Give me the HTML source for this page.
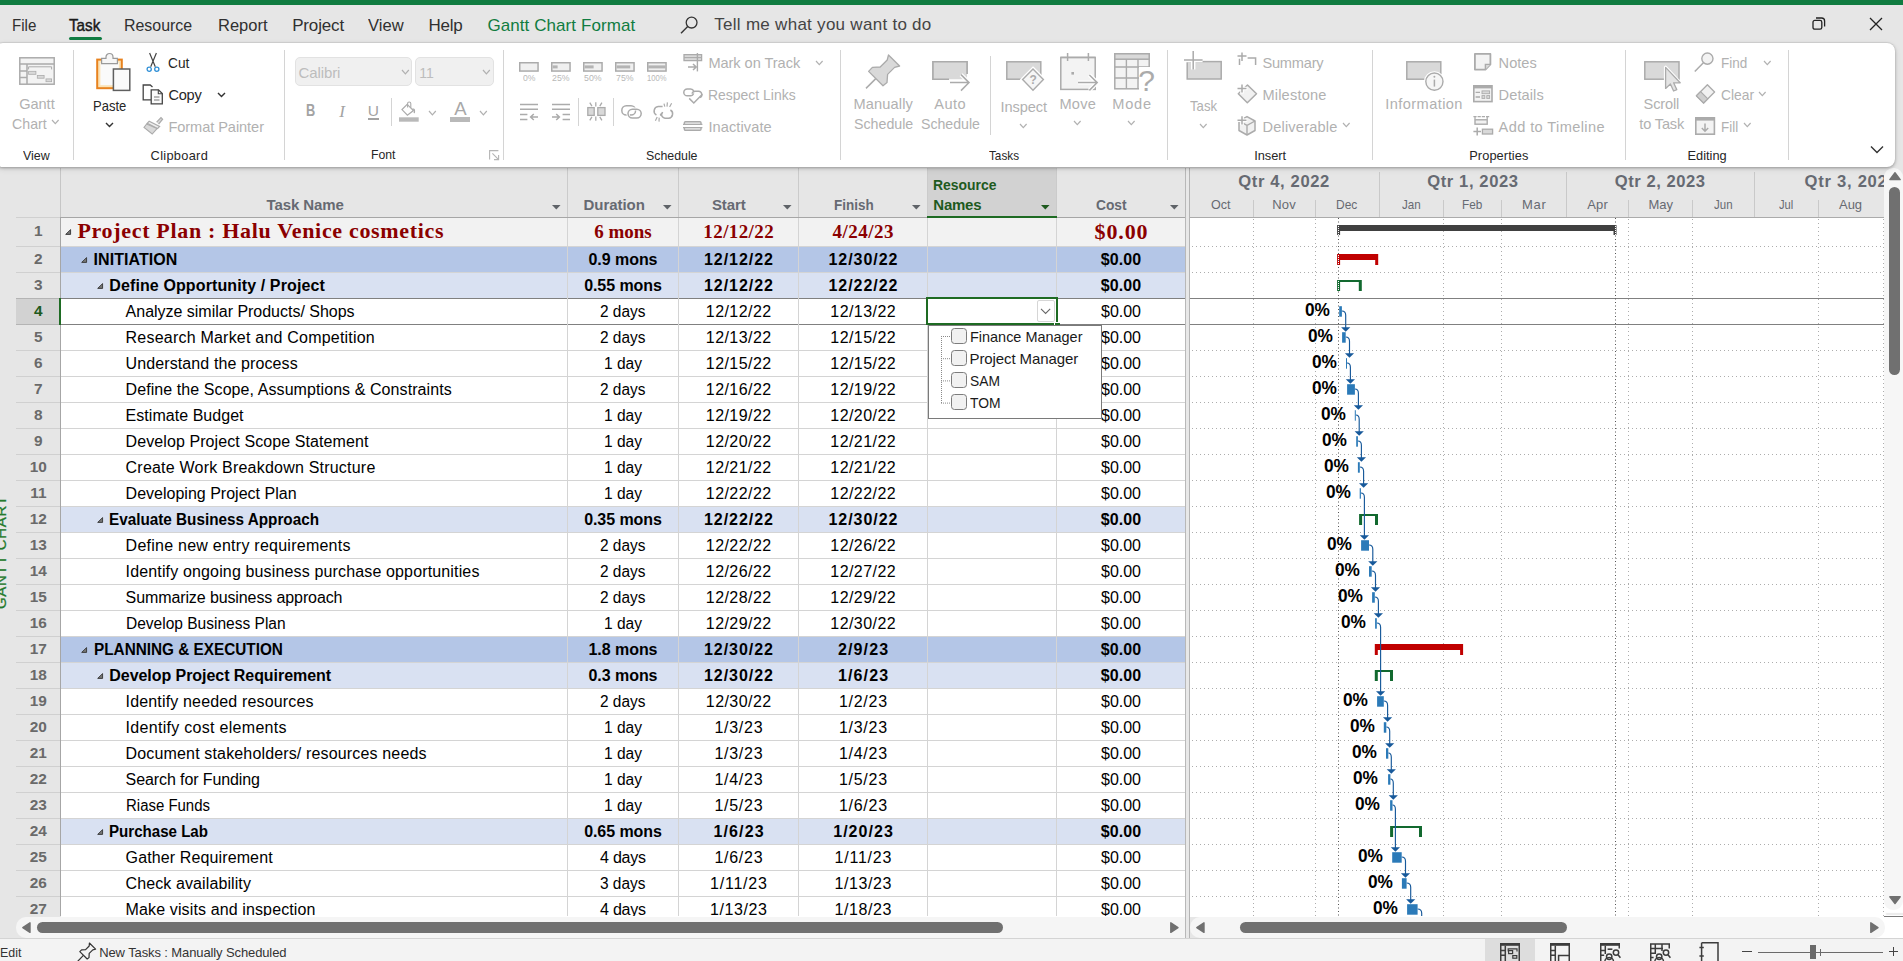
<!DOCTYPE html><html><head><meta charset="utf-8"><title>Project</title><style>html,body{margin:0;padding:0}body{width:1903px;height:961px;position:relative;overflow:hidden;background:#e6e6e6;font-family:'Liberation Sans',sans-serif}
body>div,body>span,body>svg{position:absolute;display:block}span{white-space:pre}svg{overflow:visible}</style></head><body>
<div style="left:0px;top:166px;width:1903px;height:772px;background:#e6e6e6;"></div>
<div style="left:61px;top:218px;width:1124px;height:698px;background:#fff;"></div>
<div style="left:61px;top:218px;width:1124px;height:28px;background:#f2f2f2;"></div>
<div style="left:61px;top:247px;width:1124px;height:25px;background:#b4c6e7;"></div>
<div style="left:61px;top:273px;width:1124px;height:25px;background:#d9e1f2;"></div>
<div style="left:61px;top:507px;width:1124px;height:25px;background:#d9e1f2;"></div>
<div style="left:61px;top:637px;width:1124px;height:25px;background:#b4c6e7;"></div>
<div style="left:61px;top:663px;width:1124px;height:25px;background:#d9e1f2;"></div>
<div style="left:61px;top:819px;width:1124px;height:25px;background:#d9e1f2;"></div>
<div style="left:16px;top:299px;width:43px;height:25px;background:#d2d2d2;"></div>
<div style="left:16px;top:246px;width:45px;height:1px;background:#d0d0d0;"></div>
<div style="left:61px;top:246px;width:1124px;height:1px;background:#d4d4d4;"></div>
<div style="left:16px;top:272px;width:45px;height:1px;background:#d0d0d0;"></div>
<div style="left:61px;top:272px;width:1124px;height:1px;background:#d4d4d4;"></div>
<div style="left:16px;top:298px;width:45px;height:1px;background:#b4b4b4;"></div>
<div style="left:61px;top:298px;width:1124px;height:1px;background:#808080;"></div>
<div style="left:16px;top:324px;width:45px;height:1px;background:#b4b4b4;"></div>
<div style="left:61px;top:324px;width:1124px;height:1px;background:#808080;"></div>
<div style="left:16px;top:350px;width:45px;height:1px;background:#d0d0d0;"></div>
<div style="left:61px;top:350px;width:1124px;height:1px;background:#d4d4d4;"></div>
<div style="left:16px;top:376px;width:45px;height:1px;background:#d0d0d0;"></div>
<div style="left:61px;top:376px;width:1124px;height:1px;background:#d4d4d4;"></div>
<div style="left:16px;top:402px;width:45px;height:1px;background:#d0d0d0;"></div>
<div style="left:61px;top:402px;width:1124px;height:1px;background:#d4d4d4;"></div>
<div style="left:16px;top:428px;width:45px;height:1px;background:#d0d0d0;"></div>
<div style="left:61px;top:428px;width:1124px;height:1px;background:#d4d4d4;"></div>
<div style="left:16px;top:454px;width:45px;height:1px;background:#d0d0d0;"></div>
<div style="left:61px;top:454px;width:1124px;height:1px;background:#d4d4d4;"></div>
<div style="left:16px;top:480px;width:45px;height:1px;background:#d0d0d0;"></div>
<div style="left:61px;top:480px;width:1124px;height:1px;background:#d4d4d4;"></div>
<div style="left:16px;top:506px;width:45px;height:1px;background:#d0d0d0;"></div>
<div style="left:61px;top:506px;width:1124px;height:1px;background:#d4d4d4;"></div>
<div style="left:16px;top:532px;width:45px;height:1px;background:#d0d0d0;"></div>
<div style="left:61px;top:532px;width:1124px;height:1px;background:#d4d4d4;"></div>
<div style="left:16px;top:558px;width:45px;height:1px;background:#d0d0d0;"></div>
<div style="left:61px;top:558px;width:1124px;height:1px;background:#d4d4d4;"></div>
<div style="left:16px;top:584px;width:45px;height:1px;background:#d0d0d0;"></div>
<div style="left:61px;top:584px;width:1124px;height:1px;background:#d4d4d4;"></div>
<div style="left:16px;top:610px;width:45px;height:1px;background:#d0d0d0;"></div>
<div style="left:61px;top:610px;width:1124px;height:1px;background:#d4d4d4;"></div>
<div style="left:16px;top:636px;width:45px;height:1px;background:#d0d0d0;"></div>
<div style="left:61px;top:636px;width:1124px;height:1px;background:#d4d4d4;"></div>
<div style="left:16px;top:662px;width:45px;height:1px;background:#d0d0d0;"></div>
<div style="left:61px;top:662px;width:1124px;height:1px;background:#d4d4d4;"></div>
<div style="left:16px;top:688px;width:45px;height:1px;background:#d0d0d0;"></div>
<div style="left:61px;top:688px;width:1124px;height:1px;background:#d4d4d4;"></div>
<div style="left:16px;top:714px;width:45px;height:1px;background:#d0d0d0;"></div>
<div style="left:61px;top:714px;width:1124px;height:1px;background:#d4d4d4;"></div>
<div style="left:16px;top:740px;width:45px;height:1px;background:#d0d0d0;"></div>
<div style="left:61px;top:740px;width:1124px;height:1px;background:#d4d4d4;"></div>
<div style="left:16px;top:766px;width:45px;height:1px;background:#d0d0d0;"></div>
<div style="left:61px;top:766px;width:1124px;height:1px;background:#d4d4d4;"></div>
<div style="left:16px;top:792px;width:45px;height:1px;background:#d0d0d0;"></div>
<div style="left:61px;top:792px;width:1124px;height:1px;background:#d4d4d4;"></div>
<div style="left:16px;top:818px;width:45px;height:1px;background:#d0d0d0;"></div>
<div style="left:61px;top:818px;width:1124px;height:1px;background:#d4d4d4;"></div>
<div style="left:16px;top:844px;width:45px;height:1px;background:#d0d0d0;"></div>
<div style="left:61px;top:844px;width:1124px;height:1px;background:#d4d4d4;"></div>
<div style="left:16px;top:870px;width:45px;height:1px;background:#d0d0d0;"></div>
<div style="left:61px;top:870px;width:1124px;height:1px;background:#d4d4d4;"></div>
<div style="left:16px;top:896px;width:45px;height:1px;background:#d0d0d0;"></div>
<div style="left:61px;top:896px;width:1124px;height:1px;background:#d4d4d4;"></div>
<div style="left:567px;top:168px;width:1px;height:49px;background:#cbcbcb;"></div>
<div style="left:567px;top:218px;width:1px;height:698px;background:#d4d4d4;"></div>
<div style="left:678px;top:168px;width:1px;height:49px;background:#cbcbcb;"></div>
<div style="left:678px;top:218px;width:1px;height:698px;background:#d4d4d4;"></div>
<div style="left:798px;top:168px;width:1px;height:49px;background:#cbcbcb;"></div>
<div style="left:798px;top:218px;width:1px;height:698px;background:#d4d4d4;"></div>
<div style="left:927px;top:168px;width:1px;height:49px;background:#cbcbcb;"></div>
<div style="left:927px;top:218px;width:1px;height:698px;background:#d4d4d4;"></div>
<div style="left:1056px;top:168px;width:1px;height:49px;background:#cbcbcb;"></div>
<div style="left:1056px;top:218px;width:1px;height:698px;background:#d4d4d4;"></div>
<div style="left:60px;top:168px;width:1px;height:49px;background:#c6c6c6;"></div>
<div style="left:60px;top:217px;width:1px;height:699px;background:#a6a6a6;"></div>
<div style="left:928px;top:168px;width:128px;height:48px;background:#d2d2d2;"></div>
<div style="left:927px;top:215.5px;width:130px;height:2px;background:#1e6b23;"></div>
<div style="left:16px;top:217px;width:44px;height:1px;background:#d0d0d0;"></div>
<div style="left:61px;top:217px;width:866px;height:1px;background:#a6a6a6;"></div>
<div style="left:1057px;top:217px;width:128px;height:1px;background:#a6a6a6;"></div>
<span style="left:266.50px;top:197.30px;font:700 15px/15px 'Liberation Sans',sans-serif;color:#666a72;letter-spacing:-0.084px;">Task Name</span>
<span style="left:583.50px;top:197.30px;font:700 15px/15px 'Liberation Sans',sans-serif;color:#666a72;letter-spacing:-0.050px;">Duration</span>
<span style="left:711.90px;top:197.30px;font:700 15px/15px 'Liberation Sans',sans-serif;color:#666a72;letter-spacing:-0.100px;">Start</span>
<span style="left:833.70px;top:197.30px;font:700 15px/15px 'Liberation Sans',sans-serif;color:#666a72;transform:scaleX(0.8987);transform-origin:0 0;">Finish</span>
<span style="left:933.30px;top:177.10px;font:700 15px/15px 'Liberation Sans',sans-serif;color:#1e5a1e;transform:scaleX(0.9284);transform-origin:0 0;">Resource</span>
<span style="left:933.30px;top:197.30px;font:700 15px/15px 'Liberation Sans',sans-serif;color:#1e5a1e;letter-spacing:-0.250px;">Names</span>
<span style="left:1096.20px;top:197.30px;font:700 15px/15px 'Liberation Sans',sans-serif;color:#666a72;transform:scaleX(0.9189);transform-origin:0 0;">Cost</span>
<svg style="left:552px;top:205.3px;" width="8.6" height="4.6" viewBox="0 0 8.6 4.6"><path d="M0 0 H8.6 L4.3 4.5 Z" fill="#5f6368"/></svg>
<svg style="left:663px;top:205.3px;" width="8.6" height="4.6" viewBox="0 0 8.6 4.6"><path d="M0 0 H8.6 L4.3 4.5 Z" fill="#5f6368"/></svg>
<svg style="left:782.6px;top:205.3px;" width="8.6" height="4.6" viewBox="0 0 8.6 4.6"><path d="M0 0 H8.6 L4.3 4.5 Z" fill="#5f6368"/></svg>
<svg style="left:911.7px;top:205.3px;" width="8.6" height="4.6" viewBox="0 0 8.6 4.6"><path d="M0 0 H8.6 L4.3 4.5 Z" fill="#5f6368"/></svg>
<svg style="left:1040.8px;top:205.3px;" width="8.6" height="4.6" viewBox="0 0 8.6 4.6"><path d="M0 0 H8.6 L4.3 4.5 Z" fill="#1e5a1e"/></svg>
<svg style="left:1169.9px;top:205.3px;" width="8.6" height="4.6" viewBox="0 0 8.6 4.6"><path d="M0 0 H8.6 L4.3 4.5 Z" fill="#5f6368"/></svg>
<span style="left:34.03px;top:222.76px;font:700 15.4px/15.4px 'Liberation Sans',sans-serif;color:#6a6a6a;">1</span>
<span style="left:77.40px;top:220.27px;font:700 22px/22px 'Liberation Serif',serif;color:#8b0000;letter-spacing:0.682px;">Project Plan : Halu Venice cosmetics</span>
<span style="left:594.35px;top:221.59px;font:700 19px/19px 'Liberation Serif',serif;color:#8b0000;letter-spacing:-0.054px;">6 mons</span>
<span style="left:703.35px;top:221.59px;font:700 19px/19px 'Liberation Serif',serif;color:#8b0000;letter-spacing:0.394px;">12/12/22</span>
<span style="left:832.45px;top:221.59px;font:700 19px/19px 'Liberation Serif',serif;color:#8b0000;letter-spacing:0.509px;">4/24/23</span>
<span style="left:1094.50px;top:220.57px;font:700 22px/22px 'Liberation Serif',serif;color:#8b0000;letter-spacing:0.875px;">$0.00</span>
<svg style="left:65.3px;top:228.8px;" width="6.4" height="6" viewBox="0 0 6.4 6"><path d="M5.6 .6 V5.4 H.7 Z" fill="#777" stroke="#333" stroke-width=".9" stroke-linejoin="round"/></svg>
<span style="left:34.03px;top:251.36px;font:700 15.4px/15.4px 'Liberation Sans',sans-serif;color:#6a6a6a;">2</span>
<span style="left:93.50px;top:251.86px;font:700 16px/16px 'Liberation Sans',sans-serif;color:#000;letter-spacing:0.069px;">INITIATION</span>
<span style="left:588.50px;top:251.86px;font:700 16px/16px 'Liberation Sans',sans-serif;color:#000;letter-spacing:-0.051px;">0.9 mons</span>
<span style="left:704.00px;top:251.86px;font:700 16px/16px 'Liberation Sans',sans-serif;color:#000;letter-spacing:0.954px;">12/12/22</span>
<span style="left:828.50px;top:251.86px;font:700 16px/16px 'Liberation Sans',sans-serif;color:#000;letter-spacing:0.954px;">12/30/22</span>
<span style="left:1100.80px;top:251.86px;font:700 16px/16px 'Liberation Sans',sans-serif;color:#000;letter-spacing:0.080px;">$0.00</span>
<svg style="left:81.2px;top:256.8px;" width="6.4" height="6" viewBox="0 0 6.4 6"><path d="M5.6 .6 V5.4 H.7 Z" fill="#777" stroke="#333" stroke-width=".9" stroke-linejoin="round"/></svg>
<span style="left:34.03px;top:277.36px;font:700 15.4px/15.4px 'Liberation Sans',sans-serif;color:#6a6a6a;">3</span>
<span style="left:109.30px;top:277.86px;font:700 16px/16px 'Liberation Sans',sans-serif;color:#000;letter-spacing:0.112px;">Define Opportunity / Project</span>
<span style="left:584.15px;top:277.86px;font:700 16px/16px 'Liberation Sans',sans-serif;color:#000;letter-spacing:-0.067px;">0.55 mons</span>
<span style="left:704.00px;top:277.86px;font:700 16px/16px 'Liberation Sans',sans-serif;color:#000;letter-spacing:0.954px;">12/12/22</span>
<span style="left:828.50px;top:277.86px;font:700 16px/16px 'Liberation Sans',sans-serif;color:#000;letter-spacing:0.954px;">12/22/22</span>
<span style="left:1100.80px;top:277.86px;font:700 16px/16px 'Liberation Sans',sans-serif;color:#000;letter-spacing:0.080px;">$0.00</span>
<svg style="left:97.4px;top:282.8px;" width="6.4" height="6" viewBox="0 0 6.4 6"><path d="M5.6 .6 V5.4 H.7 Z" fill="#777" stroke="#333" stroke-width=".9" stroke-linejoin="round"/></svg>
<span style="left:34.03px;top:303.36px;font:700 15.4px/15.4px 'Liberation Sans',sans-serif;color:#1e5a1e;">4</span>
<span style="left:125.60px;top:303.86px;font:400 16px/16px 'Liberation Sans',sans-serif;color:#000;letter-spacing:-0.015px;">Analyze similar Products/ Shops</span>
<span style="left:600.30px;top:303.86px;font:400 16px/16px 'Liberation Sans',sans-serif;color:#000;transform:scaleX(0.9635);transform-origin:0 0;">2 days</span>
<span style="left:705.81px;top:303.86px;font:400 16px/16px 'Liberation Sans',sans-serif;color:#000;letter-spacing:0.437px;">12/12/22</span>
<span style="left:830.31px;top:303.86px;font:400 16px/16px 'Liberation Sans',sans-serif;color:#000;letter-spacing:0.437px;">12/13/22</span>
<span style="left:1101.00px;top:303.86px;font:400 16px/16px 'Liberation Sans',sans-serif;color:#000;letter-spacing:-0.020px;">$0.00</span>
<span style="left:34.03px;top:329.36px;font:700 15.4px/15.4px 'Liberation Sans',sans-serif;color:#6a6a6a;">5</span>
<span style="left:125.60px;top:329.86px;font:400 16px/16px 'Liberation Sans',sans-serif;color:#000;letter-spacing:0.213px;">Research Market and Competition</span>
<span style="left:600.30px;top:329.86px;font:400 16px/16px 'Liberation Sans',sans-serif;color:#000;transform:scaleX(0.9635);transform-origin:0 0;">2 days</span>
<span style="left:705.81px;top:329.86px;font:400 16px/16px 'Liberation Sans',sans-serif;color:#000;letter-spacing:0.437px;">12/13/22</span>
<span style="left:830.31px;top:329.86px;font:400 16px/16px 'Liberation Sans',sans-serif;color:#000;letter-spacing:0.437px;">12/15/22</span>
<span style="left:1101.00px;top:329.86px;font:400 16px/16px 'Liberation Sans',sans-serif;color:#000;letter-spacing:-0.020px;">$0.00</span>
<span style="left:34.03px;top:355.36px;font:700 15.4px/15.4px 'Liberation Sans',sans-serif;color:#6a6a6a;">6</span>
<span style="left:125.60px;top:355.86px;font:400 16px/16px 'Liberation Sans',sans-serif;color:#000;letter-spacing:0.103px;">Understand the process</span>
<span style="left:604.00px;top:355.86px;font:400 16px/16px 'Liberation Sans',sans-serif;color:#000;transform:scaleX(0.9714);transform-origin:0 0;">1 day</span>
<span style="left:705.81px;top:355.86px;font:400 16px/16px 'Liberation Sans',sans-serif;color:#000;letter-spacing:0.437px;">12/15/22</span>
<span style="left:830.31px;top:355.86px;font:400 16px/16px 'Liberation Sans',sans-serif;color:#000;letter-spacing:0.437px;">12/15/22</span>
<span style="left:1101.00px;top:355.86px;font:400 16px/16px 'Liberation Sans',sans-serif;color:#000;letter-spacing:-0.020px;">$0.00</span>
<span style="left:34.03px;top:381.36px;font:700 15.4px/15.4px 'Liberation Sans',sans-serif;color:#6a6a6a;">7</span>
<span style="left:125.60px;top:381.86px;font:400 16px/16px 'Liberation Sans',sans-serif;color:#000;letter-spacing:0.077px;">Define the Scope, Assumptions &amp; Constraints</span>
<span style="left:600.30px;top:381.86px;font:400 16px/16px 'Liberation Sans',sans-serif;color:#000;transform:scaleX(0.9635);transform-origin:0 0;">2 days</span>
<span style="left:705.81px;top:381.86px;font:400 16px/16px 'Liberation Sans',sans-serif;color:#000;letter-spacing:0.437px;">12/16/22</span>
<span style="left:830.31px;top:381.86px;font:400 16px/16px 'Liberation Sans',sans-serif;color:#000;letter-spacing:0.437px;">12/19/22</span>
<span style="left:1101.00px;top:381.86px;font:400 16px/16px 'Liberation Sans',sans-serif;color:#000;letter-spacing:-0.020px;">$0.00</span>
<span style="left:34.03px;top:407.36px;font:700 15.4px/15.4px 'Liberation Sans',sans-serif;color:#6a6a6a;">8</span>
<span style="left:125.60px;top:407.86px;font:400 16px/16px 'Liberation Sans',sans-serif;color:#000;letter-spacing:0.040px;">Estimate Budget</span>
<span style="left:604.00px;top:407.86px;font:400 16px/16px 'Liberation Sans',sans-serif;color:#000;transform:scaleX(0.9714);transform-origin:0 0;">1 day</span>
<span style="left:705.81px;top:407.86px;font:400 16px/16px 'Liberation Sans',sans-serif;color:#000;letter-spacing:0.437px;">12/19/22</span>
<span style="left:830.31px;top:407.86px;font:400 16px/16px 'Liberation Sans',sans-serif;color:#000;letter-spacing:0.437px;">12/20/22</span>
<span style="left:1101.00px;top:407.86px;font:400 16px/16px 'Liberation Sans',sans-serif;color:#000;letter-spacing:-0.020px;">$0.00</span>
<span style="left:34.03px;top:433.36px;font:700 15.4px/15.4px 'Liberation Sans',sans-serif;color:#6a6a6a;">9</span>
<span style="left:125.60px;top:433.86px;font:400 16px/16px 'Liberation Sans',sans-serif;color:#000;letter-spacing:0.088px;">Develop Project Scope Statement</span>
<span style="left:604.00px;top:433.86px;font:400 16px/16px 'Liberation Sans',sans-serif;color:#000;transform:scaleX(0.9714);transform-origin:0 0;">1 day</span>
<span style="left:705.81px;top:433.86px;font:400 16px/16px 'Liberation Sans',sans-serif;color:#000;letter-spacing:0.437px;">12/20/22</span>
<span style="left:830.31px;top:433.86px;font:400 16px/16px 'Liberation Sans',sans-serif;color:#000;letter-spacing:0.437px;">12/21/22</span>
<span style="left:1101.00px;top:433.86px;font:400 16px/16px 'Liberation Sans',sans-serif;color:#000;letter-spacing:-0.020px;">$0.00</span>
<span style="left:29.75px;top:459.36px;font:700 15.4px/15.4px 'Liberation Sans',sans-serif;color:#6a6a6a;">10</span>
<span style="left:125.60px;top:459.86px;font:400 16px/16px 'Liberation Sans',sans-serif;color:#000;letter-spacing:0.211px;">Create Work Breakdown Structure</span>
<span style="left:604.00px;top:459.86px;font:400 16px/16px 'Liberation Sans',sans-serif;color:#000;transform:scaleX(0.9714);transform-origin:0 0;">1 day</span>
<span style="left:705.81px;top:459.86px;font:400 16px/16px 'Liberation Sans',sans-serif;color:#000;letter-spacing:0.437px;">12/21/22</span>
<span style="left:830.31px;top:459.86px;font:400 16px/16px 'Liberation Sans',sans-serif;color:#000;letter-spacing:0.437px;">12/21/22</span>
<span style="left:1101.00px;top:459.86px;font:400 16px/16px 'Liberation Sans',sans-serif;color:#000;letter-spacing:-0.020px;">$0.00</span>
<span style="left:30.18px;top:485.36px;font:700 15.4px/15.4px 'Liberation Sans',sans-serif;color:#6a6a6a;">11</span>
<span style="left:125.60px;top:485.86px;font:400 16px/16px 'Liberation Sans',sans-serif;color:#000;letter-spacing:0.009px;">Developing Project Plan</span>
<span style="left:604.00px;top:485.86px;font:400 16px/16px 'Liberation Sans',sans-serif;color:#000;transform:scaleX(0.9714);transform-origin:0 0;">1 day</span>
<span style="left:705.81px;top:485.86px;font:400 16px/16px 'Liberation Sans',sans-serif;color:#000;letter-spacing:0.437px;">12/22/22</span>
<span style="left:830.31px;top:485.86px;font:400 16px/16px 'Liberation Sans',sans-serif;color:#000;letter-spacing:0.437px;">12/22/22</span>
<span style="left:1101.00px;top:485.86px;font:400 16px/16px 'Liberation Sans',sans-serif;color:#000;letter-spacing:-0.020px;">$0.00</span>
<span style="left:29.75px;top:511.36px;font:700 15.4px/15.4px 'Liberation Sans',sans-serif;color:#6a6a6a;">12</span>
<span style="left:109.30px;top:511.86px;font:700 16px/16px 'Liberation Sans',sans-serif;color:#000;transform:scaleX(0.9549);transform-origin:0 0;">Evaluate Business Approach</span>
<span style="left:584.15px;top:511.86px;font:700 16px/16px 'Liberation Sans',sans-serif;color:#000;letter-spacing:-0.067px;">0.35 mons</span>
<span style="left:704.00px;top:511.86px;font:700 16px/16px 'Liberation Sans',sans-serif;color:#000;letter-spacing:0.954px;">12/22/22</span>
<span style="left:828.50px;top:511.86px;font:700 16px/16px 'Liberation Sans',sans-serif;color:#000;letter-spacing:0.954px;">12/30/22</span>
<span style="left:1100.80px;top:511.86px;font:700 16px/16px 'Liberation Sans',sans-serif;color:#000;letter-spacing:0.080px;">$0.00</span>
<svg style="left:97.4px;top:516.8px;" width="6.4" height="6" viewBox="0 0 6.4 6"><path d="M5.6 .6 V5.4 H.7 Z" fill="#777" stroke="#333" stroke-width=".9" stroke-linejoin="round"/></svg>
<span style="left:29.75px;top:537.36px;font:700 15.4px/15.4px 'Liberation Sans',sans-serif;color:#6a6a6a;">13</span>
<span style="left:125.60px;top:537.86px;font:400 16px/16px 'Liberation Sans',sans-serif;color:#000;letter-spacing:0.249px;">Define new entry requirements</span>
<span style="left:600.30px;top:537.86px;font:400 16px/16px 'Liberation Sans',sans-serif;color:#000;transform:scaleX(0.9635);transform-origin:0 0;">2 days</span>
<span style="left:705.81px;top:537.86px;font:400 16px/16px 'Liberation Sans',sans-serif;color:#000;letter-spacing:0.437px;">12/22/22</span>
<span style="left:830.31px;top:537.86px;font:400 16px/16px 'Liberation Sans',sans-serif;color:#000;letter-spacing:0.437px;">12/26/22</span>
<span style="left:1101.00px;top:537.86px;font:400 16px/16px 'Liberation Sans',sans-serif;color:#000;letter-spacing:-0.020px;">$0.00</span>
<span style="left:29.75px;top:563.36px;font:700 15.4px/15.4px 'Liberation Sans',sans-serif;color:#6a6a6a;">14</span>
<span style="left:125.60px;top:563.86px;font:400 16px/16px 'Liberation Sans',sans-serif;color:#000;letter-spacing:0.147px;">Identify ongoing business purchase opportunities</span>
<span style="left:600.30px;top:563.86px;font:400 16px/16px 'Liberation Sans',sans-serif;color:#000;transform:scaleX(0.9635);transform-origin:0 0;">2 days</span>
<span style="left:705.81px;top:563.86px;font:400 16px/16px 'Liberation Sans',sans-serif;color:#000;letter-spacing:0.437px;">12/26/22</span>
<span style="left:830.31px;top:563.86px;font:400 16px/16px 'Liberation Sans',sans-serif;color:#000;letter-spacing:0.437px;">12/27/22</span>
<span style="left:1101.00px;top:563.86px;font:400 16px/16px 'Liberation Sans',sans-serif;color:#000;letter-spacing:-0.020px;">$0.00</span>
<span style="left:29.75px;top:589.36px;font:700 15.4px/15.4px 'Liberation Sans',sans-serif;color:#6a6a6a;">15</span>
<span style="left:125.60px;top:589.86px;font:400 16px/16px 'Liberation Sans',sans-serif;color:#000;letter-spacing:-0.107px;">Summarize business approach</span>
<span style="left:600.30px;top:589.86px;font:400 16px/16px 'Liberation Sans',sans-serif;color:#000;transform:scaleX(0.9635);transform-origin:0 0;">2 days</span>
<span style="left:705.81px;top:589.86px;font:400 16px/16px 'Liberation Sans',sans-serif;color:#000;letter-spacing:0.437px;">12/28/22</span>
<span style="left:830.31px;top:589.86px;font:400 16px/16px 'Liberation Sans',sans-serif;color:#000;letter-spacing:0.437px;">12/29/22</span>
<span style="left:1101.00px;top:589.86px;font:400 16px/16px 'Liberation Sans',sans-serif;color:#000;letter-spacing:-0.020px;">$0.00</span>
<span style="left:29.75px;top:615.36px;font:700 15.4px/15.4px 'Liberation Sans',sans-serif;color:#6a6a6a;">16</span>
<span style="left:125.60px;top:615.86px;font:400 16px/16px 'Liberation Sans',sans-serif;color:#000;transform:scaleX(0.9699);transform-origin:0 0;">Develop Business Plan</span>
<span style="left:604.00px;top:615.86px;font:400 16px/16px 'Liberation Sans',sans-serif;color:#000;transform:scaleX(0.9714);transform-origin:0 0;">1 day</span>
<span style="left:705.81px;top:615.86px;font:400 16px/16px 'Liberation Sans',sans-serif;color:#000;letter-spacing:0.437px;">12/29/22</span>
<span style="left:830.31px;top:615.86px;font:400 16px/16px 'Liberation Sans',sans-serif;color:#000;letter-spacing:0.437px;">12/30/22</span>
<span style="left:1101.00px;top:615.86px;font:400 16px/16px 'Liberation Sans',sans-serif;color:#000;letter-spacing:-0.020px;">$0.00</span>
<span style="left:29.75px;top:641.36px;font:700 15.4px/15.4px 'Liberation Sans',sans-serif;color:#6a6a6a;">17</span>
<span style="left:93.50px;top:641.86px;font:700 16px/16px 'Liberation Sans',sans-serif;color:#000;transform:scaleX(0.9571);transform-origin:0 0;">PLANNING &amp; EXECUTION</span>
<span style="left:588.50px;top:641.86px;font:700 16px/16px 'Liberation Sans',sans-serif;color:#000;letter-spacing:-0.051px;">1.8 mons</span>
<span style="left:704.00px;top:641.86px;font:700 16px/16px 'Liberation Sans',sans-serif;color:#000;letter-spacing:0.954px;">12/30/22</span>
<span style="left:837.90px;top:641.86px;font:700 16px/16px 'Liberation Sans',sans-serif;color:#000;letter-spacing:1.144px;">2/9/23</span>
<span style="left:1100.80px;top:641.86px;font:700 16px/16px 'Liberation Sans',sans-serif;color:#000;letter-spacing:0.080px;">$0.00</span>
<svg style="left:81.2px;top:646.8px;" width="6.4" height="6" viewBox="0 0 6.4 6"><path d="M5.6 .6 V5.4 H.7 Z" fill="#777" stroke="#333" stroke-width=".9" stroke-linejoin="round"/></svg>
<span style="left:29.75px;top:667.36px;font:700 15.4px/15.4px 'Liberation Sans',sans-serif;color:#6a6a6a;">18</span>
<span style="left:109.30px;top:667.86px;font:700 16px/16px 'Liberation Sans',sans-serif;color:#000;letter-spacing:-0.054px;">Develop Project Requirement</span>
<span style="left:588.50px;top:667.86px;font:700 16px/16px 'Liberation Sans',sans-serif;color:#000;letter-spacing:-0.051px;">0.3 mons</span>
<span style="left:704.00px;top:667.86px;font:700 16px/16px 'Liberation Sans',sans-serif;color:#000;letter-spacing:0.954px;">12/30/22</span>
<span style="left:837.90px;top:667.86px;font:700 16px/16px 'Liberation Sans',sans-serif;color:#000;letter-spacing:1.144px;">1/6/23</span>
<span style="left:1100.80px;top:667.86px;font:700 16px/16px 'Liberation Sans',sans-serif;color:#000;letter-spacing:0.080px;">$0.00</span>
<svg style="left:97.4px;top:672.8px;" width="6.4" height="6" viewBox="0 0 6.4 6"><path d="M5.6 .6 V5.4 H.7 Z" fill="#777" stroke="#333" stroke-width=".9" stroke-linejoin="round"/></svg>
<span style="left:29.75px;top:693.36px;font:700 15.4px/15.4px 'Liberation Sans',sans-serif;color:#6a6a6a;">19</span>
<span style="left:125.60px;top:693.86px;font:400 16px/16px 'Liberation Sans',sans-serif;color:#000;letter-spacing:0.156px;">Identify needed resources</span>
<span style="left:600.30px;top:693.86px;font:400 16px/16px 'Liberation Sans',sans-serif;color:#000;transform:scaleX(0.9635);transform-origin:0 0;">2 days</span>
<span style="left:705.81px;top:693.86px;font:400 16px/16px 'Liberation Sans',sans-serif;color:#000;letter-spacing:0.437px;">12/30/22</span>
<span style="left:838.94px;top:693.86px;font:400 16px/16px 'Liberation Sans',sans-serif;color:#000;letter-spacing:0.728px;">1/2/23</span>
<span style="left:1101.00px;top:693.86px;font:400 16px/16px 'Liberation Sans',sans-serif;color:#000;letter-spacing:-0.020px;">$0.00</span>
<span style="left:29.75px;top:719.36px;font:700 15.4px/15.4px 'Liberation Sans',sans-serif;color:#6a6a6a;">20</span>
<span style="left:125.60px;top:719.86px;font:400 16px/16px 'Liberation Sans',sans-serif;color:#000;letter-spacing:0.294px;">Identify cost elements</span>
<span style="left:604.00px;top:719.86px;font:400 16px/16px 'Liberation Sans',sans-serif;color:#000;transform:scaleX(0.9714);transform-origin:0 0;">1 day</span>
<span style="left:714.44px;top:719.86px;font:400 16px/16px 'Liberation Sans',sans-serif;color:#000;letter-spacing:0.728px;">1/3/23</span>
<span style="left:838.94px;top:719.86px;font:400 16px/16px 'Liberation Sans',sans-serif;color:#000;letter-spacing:0.728px;">1/3/23</span>
<span style="left:1101.00px;top:719.86px;font:400 16px/16px 'Liberation Sans',sans-serif;color:#000;letter-spacing:-0.020px;">$0.00</span>
<span style="left:29.75px;top:745.36px;font:700 15.4px/15.4px 'Liberation Sans',sans-serif;color:#6a6a6a;">21</span>
<span style="left:125.60px;top:745.86px;font:400 16px/16px 'Liberation Sans',sans-serif;color:#000;letter-spacing:0.152px;">Document stakeholders/ resources needs</span>
<span style="left:604.00px;top:745.86px;font:400 16px/16px 'Liberation Sans',sans-serif;color:#000;transform:scaleX(0.9714);transform-origin:0 0;">1 day</span>
<span style="left:714.44px;top:745.86px;font:400 16px/16px 'Liberation Sans',sans-serif;color:#000;letter-spacing:0.728px;">1/3/23</span>
<span style="left:838.94px;top:745.86px;font:400 16px/16px 'Liberation Sans',sans-serif;color:#000;letter-spacing:0.728px;">1/4/23</span>
<span style="left:1101.00px;top:745.86px;font:400 16px/16px 'Liberation Sans',sans-serif;color:#000;letter-spacing:-0.020px;">$0.00</span>
<span style="left:29.75px;top:771.36px;font:700 15.4px/15.4px 'Liberation Sans',sans-serif;color:#6a6a6a;">22</span>
<span style="left:125.60px;top:771.86px;font:400 16px/16px 'Liberation Sans',sans-serif;color:#000;letter-spacing:-0.099px;">Search for Funding</span>
<span style="left:604.00px;top:771.86px;font:400 16px/16px 'Liberation Sans',sans-serif;color:#000;transform:scaleX(0.9714);transform-origin:0 0;">1 day</span>
<span style="left:714.44px;top:771.86px;font:400 16px/16px 'Liberation Sans',sans-serif;color:#000;letter-spacing:0.728px;">1/4/23</span>
<span style="left:838.94px;top:771.86px;font:400 16px/16px 'Liberation Sans',sans-serif;color:#000;letter-spacing:0.728px;">1/5/23</span>
<span style="left:1101.00px;top:771.86px;font:400 16px/16px 'Liberation Sans',sans-serif;color:#000;letter-spacing:-0.020px;">$0.00</span>
<span style="left:29.75px;top:797.36px;font:700 15.4px/15.4px 'Liberation Sans',sans-serif;color:#6a6a6a;">23</span>
<span style="left:125.60px;top:797.86px;font:400 16px/16px 'Liberation Sans',sans-serif;color:#000;transform:scaleX(0.9350);transform-origin:0 0;">Riase Funds</span>
<span style="left:604.00px;top:797.86px;font:400 16px/16px 'Liberation Sans',sans-serif;color:#000;transform:scaleX(0.9714);transform-origin:0 0;">1 day</span>
<span style="left:714.44px;top:797.86px;font:400 16px/16px 'Liberation Sans',sans-serif;color:#000;letter-spacing:0.728px;">1/5/23</span>
<span style="left:838.94px;top:797.86px;font:400 16px/16px 'Liberation Sans',sans-serif;color:#000;letter-spacing:0.728px;">1/6/23</span>
<span style="left:1101.00px;top:797.86px;font:400 16px/16px 'Liberation Sans',sans-serif;color:#000;letter-spacing:-0.020px;">$0.00</span>
<span style="left:29.75px;top:823.36px;font:700 15.4px/15.4px 'Liberation Sans',sans-serif;color:#6a6a6a;">24</span>
<span style="left:109.30px;top:823.86px;font:700 16px/16px 'Liberation Sans',sans-serif;color:#000;transform:scaleX(0.9432);transform-origin:0 0;">Purchase Lab</span>
<span style="left:584.15px;top:823.86px;font:700 16px/16px 'Liberation Sans',sans-serif;color:#000;letter-spacing:-0.067px;">0.65 mons</span>
<span style="left:713.40px;top:823.86px;font:700 16px/16px 'Liberation Sans',sans-serif;color:#000;letter-spacing:1.144px;">1/6/23</span>
<span style="left:833.20px;top:823.86px;font:700 16px/16px 'Liberation Sans',sans-serif;color:#000;letter-spacing:1.040px;">1/20/23</span>
<span style="left:1100.80px;top:823.86px;font:700 16px/16px 'Liberation Sans',sans-serif;color:#000;letter-spacing:0.080px;">$0.00</span>
<svg style="left:97.4px;top:828.8px;" width="6.4" height="6" viewBox="0 0 6.4 6"><path d="M5.6 .6 V5.4 H.7 Z" fill="#777" stroke="#333" stroke-width=".9" stroke-linejoin="round"/></svg>
<span style="left:29.75px;top:849.36px;font:700 15.4px/15.4px 'Liberation Sans',sans-serif;color:#6a6a6a;">25</span>
<span style="left:125.60px;top:849.86px;font:400 16px/16px 'Liberation Sans',sans-serif;color:#000;letter-spacing:0.120px;">Gather Requirement</span>
<span style="left:600.00px;top:849.86px;font:400 16px/16px 'Liberation Sans',sans-serif;color:#000;letter-spacing:-0.224px;">4 days</span>
<span style="left:714.44px;top:849.86px;font:400 16px/16px 'Liberation Sans',sans-serif;color:#000;letter-spacing:0.728px;">1/6/23</span>
<span style="left:834.62px;top:849.86px;font:400 16px/16px 'Liberation Sans',sans-serif;color:#000;letter-spacing:0.765px;">1/11/23</span>
<span style="left:1101.00px;top:849.86px;font:400 16px/16px 'Liberation Sans',sans-serif;color:#000;letter-spacing:-0.020px;">$0.00</span>
<span style="left:29.75px;top:875.36px;font:700 15.4px/15.4px 'Liberation Sans',sans-serif;color:#6a6a6a;">26</span>
<span style="left:125.60px;top:875.86px;font:400 16px/16px 'Liberation Sans',sans-serif;color:#000;letter-spacing:0.100px;">Check availability</span>
<span style="left:600.30px;top:875.86px;font:400 16px/16px 'Liberation Sans',sans-serif;color:#000;transform:scaleX(0.9635);transform-origin:0 0;">3 days</span>
<span style="left:710.12px;top:875.86px;font:400 16px/16px 'Liberation Sans',sans-serif;color:#000;letter-spacing:0.765px;">1/11/23</span>
<span style="left:834.62px;top:875.86px;font:400 16px/16px 'Liberation Sans',sans-serif;color:#000;letter-spacing:0.565px;">1/13/23</span>
<span style="left:1101.00px;top:875.86px;font:400 16px/16px 'Liberation Sans',sans-serif;color:#000;letter-spacing:-0.020px;">$0.00</span>
<span style="left:29.75px;top:901.36px;font:700 15.4px/15.4px 'Liberation Sans',sans-serif;color:#6a6a6a;">27</span>
<span style="left:125.60px;top:901.86px;font:400 16px/16px 'Liberation Sans',sans-serif;color:#000;letter-spacing:0.124px;">Make visits and inspection</span>
<span style="left:600.00px;top:901.86px;font:400 16px/16px 'Liberation Sans',sans-serif;color:#000;letter-spacing:-0.224px;">4 days</span>
<span style="left:710.12px;top:901.86px;font:400 16px/16px 'Liberation Sans',sans-serif;color:#000;letter-spacing:0.565px;">1/13/23</span>
<span style="left:834.62px;top:901.86px;font:400 16px/16px 'Liberation Sans',sans-serif;color:#000;letter-spacing:0.565px;">1/18/23</span>
<span style="left:1101.00px;top:901.86px;font:400 16px/16px 'Liberation Sans',sans-serif;color:#000;letter-spacing:-0.020px;">$0.00</span>
<div style="left:59px;top:298px;width:2px;height:27px;background:#1e6b23;"></div>
<div style="left:0px;top:916px;width:1903px;height:44px;background:#e6e6e6;"></div>
<div style="left:1185px;top:166px;width:5px;height:772px;background:#e8e8e8;"></div>
<div style="left:1185px;top:168px;width:1px;height:770px;background:#b8b8b8;"></div>
<div style="left:1189px;top:168px;width:1px;height:770px;background:#b4b4b4;"></div>
<div style="left:1190px;top:168px;width:694px;height:49px;background:#e6e6e6;"></div>
<div style="left:1190px;top:217px;width:694px;height:1px;background:#ababab;"></div>
<div style="left:1190px;top:218px;width:694px;height:698px;background:#fff;"></div>
<div style="left:1379px;top:172px;width:1px;height:45px;background:#c9c9c9;"></div>
<div style="left:1566px;top:172px;width:1px;height:45px;background:#c9c9c9;"></div>
<div style="left:1754px;top:172px;width:1px;height:45px;background:#c9c9c9;"></div>
<div style="left:1253px;top:200px;width:1px;height:17px;background:#c9c9c9;"></div>
<div style="left:1315px;top:200px;width:1px;height:17px;background:#c9c9c9;"></div>
<div style="left:1443px;top:200px;width:1px;height:17px;background:#c9c9c9;"></div>
<div style="left:1501px;top:200px;width:1px;height:17px;background:#c9c9c9;"></div>
<div style="left:1628px;top:200px;width:1px;height:17px;background:#c9c9c9;"></div>
<div style="left:1692px;top:200px;width:1px;height:17px;background:#c9c9c9;"></div>
<div style="left:1818px;top:200px;width:1px;height:17px;background:#c9c9c9;"></div>
<span style="left:1238.30px;top:173.75px;font:700 16.6px/16.6px 'Liberation Sans',sans-serif;color:#666a72;letter-spacing:0.619px;">Qtr 4, 2022</span>
<span style="left:1427.20px;top:173.75px;font:700 16.6px/16.6px 'Liberation Sans',sans-serif;color:#666a72;letter-spacing:0.599px;">Qtr 1, 2023</span>
<span style="left:1614.80px;top:173.75px;font:700 16.6px/16.6px 'Liberation Sans',sans-serif;color:#666a72;letter-spacing:0.529px;">Qtr 2, 2023</span>
<div style="left:1800px;top:168px;width:84px;height:30px;overflow:hidden"><span style="position:absolute;left:4.6px;top:5.75px;font:700 16.6px/16.6px 'Liberation Sans',sans-serif;color:#666a72;letter-spacing:0.730px">Qtr 3, 2023</span></div>
<span style="left:1211.40px;top:197.90px;font:400 13px/13px 'Liberation Sans',sans-serif;color:#666a72;transform:scaleX(0.9646);transform-origin:0 0;">Oct</span>
<span style="left:1272.30px;top:197.90px;font:400 13px/13px 'Liberation Sans',sans-serif;color:#666a72;letter-spacing:0.180px;">Nov</span>
<span style="left:1336.40px;top:197.90px;font:400 13px/13px 'Liberation Sans',sans-serif;color:#666a72;transform:scaleX(0.9205);transform-origin:0 0;">Dec</span>
<span style="left:1402.30px;top:197.90px;font:400 13px/13px 'Liberation Sans',sans-serif;color:#666a72;transform:scaleX(0.8935);transform-origin:0 0;">Jan</span>
<span style="left:1462.20px;top:197.90px;font:400 13px/13px 'Liberation Sans',sans-serif;color:#666a72;transform:scaleX(0.9052);transform-origin:0 0;">Feb</span>
<span style="left:1522.10px;top:197.90px;font:400 13px/13px 'Liberation Sans',sans-serif;color:#666a72;letter-spacing:0.670px;">Mar</span>
<span style="left:1587.30px;top:197.90px;font:400 13px/13px 'Liberation Sans',sans-serif;color:#666a72;letter-spacing:0.093px;">Apr</span>
<span style="left:1648.40px;top:197.90px;font:400 13px/13px 'Liberation Sans',sans-serif;color:#666a72;letter-spacing:0.015px;">May</span>
<span style="left:1714.20px;top:197.90px;font:400 13px/13px 'Liberation Sans',sans-serif;color:#666a72;transform:scaleX(0.8839);transform-origin:0 0;">Jun</span>
<span style="left:1779.40px;top:197.90px;font:400 13px/13px 'Liberation Sans',sans-serif;color:#666a72;transform:scaleX(0.8594);transform-origin:0 0;">Jul</span>
<span style="left:1839.10px;top:197.90px;font:400 13px/13px 'Liberation Sans',sans-serif;color:#666a72;letter-spacing:-0.120px;">Aug</span>
<svg style="left:1190px;top:218px;overflow:hidden" width="694" height="698" viewBox="0 0 694 698"><path d="M2 28.5 H694" stroke="#adadad" stroke-width="1" stroke-dasharray="1 3"/><path d="M2 54.5 H694" stroke="#adadad" stroke-width="1" stroke-dasharray="1 3"/><path d="M0 80.5 H694" stroke="#808080" stroke-width="1"/><path d="M0 106.5 H694" stroke="#808080" stroke-width="1"/><path d="M2 132.5 H694" stroke="#adadad" stroke-width="1" stroke-dasharray="1 3"/><path d="M2 158.5 H694" stroke="#adadad" stroke-width="1" stroke-dasharray="1 3"/><path d="M2 184.5 H694" stroke="#adadad" stroke-width="1" stroke-dasharray="1 3"/><path d="M2 210.5 H694" stroke="#adadad" stroke-width="1" stroke-dasharray="1 3"/><path d="M2 236.5 H694" stroke="#adadad" stroke-width="1" stroke-dasharray="1 3"/><path d="M2 262.5 H694" stroke="#adadad" stroke-width="1" stroke-dasharray="1 3"/><path d="M2 288.5 H694" stroke="#adadad" stroke-width="1" stroke-dasharray="1 3"/><path d="M2 314.5 H694" stroke="#adadad" stroke-width="1" stroke-dasharray="1 3"/><path d="M2 340.5 H694" stroke="#adadad" stroke-width="1" stroke-dasharray="1 3"/><path d="M2 366.5 H694" stroke="#adadad" stroke-width="1" stroke-dasharray="1 3"/><path d="M2 392.5 H694" stroke="#adadad" stroke-width="1" stroke-dasharray="1 3"/><path d="M2 418.5 H694" stroke="#adadad" stroke-width="1" stroke-dasharray="1 3"/><path d="M2 444.5 H694" stroke="#adadad" stroke-width="1" stroke-dasharray="1 3"/><path d="M2 470.5 H694" stroke="#adadad" stroke-width="1" stroke-dasharray="1 3"/><path d="M2 496.5 H694" stroke="#adadad" stroke-width="1" stroke-dasharray="1 3"/><path d="M2 522.5 H694" stroke="#adadad" stroke-width="1" stroke-dasharray="1 3"/><path d="M2 548.5 H694" stroke="#adadad" stroke-width="1" stroke-dasharray="1 3"/><path d="M2 574.5 H694" stroke="#adadad" stroke-width="1" stroke-dasharray="1 3"/><path d="M2 600.5 H694" stroke="#adadad" stroke-width="1" stroke-dasharray="1 3"/><path d="M2 626.5 H694" stroke="#adadad" stroke-width="1" stroke-dasharray="1 3"/><path d="M2 652.5 H694" stroke="#adadad" stroke-width="1" stroke-dasharray="1 3"/><path d="M2 678.5 H694" stroke="#adadad" stroke-width="1" stroke-dasharray="1 3"/><path d="M63.5 1 V698" stroke="#adadad" stroke-width="1" stroke-dasharray="1 3"/><path d="M125.5 1 V698" stroke="#adadad" stroke-width="1" stroke-dasharray="1 3"/><path d="M253.5 1 V698" stroke="#adadad" stroke-width="1" stroke-dasharray="1 3"/><path d="M311.5 1 V698" stroke="#adadad" stroke-width="1" stroke-dasharray="1 3"/><path d="M438.5 1 V698" stroke="#adadad" stroke-width="1" stroke-dasharray="1 3"/><path d="M502.5 1 V698" stroke="#adadad" stroke-width="1" stroke-dasharray="1 3"/><path d="M628.5 1 V698" stroke="#adadad" stroke-width="1" stroke-dasharray="1 3"/><path d="M693.5 1 V698" stroke="#adadad" stroke-width="1" stroke-dasharray="1 3"/><path d="M147.1 7 H426.5 V17 H423.5 V13 H150.1 V17 H147.1 Z" fill="#404040"/><path d="M147.1 36 H188.2 V47 H185.2 V42 H150.1 V47 H147.1 Z" fill="#c00000"/><path d="M147.1 62 H171.8 V73 H168.8 V64 H150.1 V73 H147.1 Z" fill="#12692f"/><path d="M169.1 296 H188 V307 H185 V298 H172.1 V307 H169.1 Z" fill="#12692f"/><path d="M184.8 426 H273.1 V437 H270.1 V432 H187.8 V437 H184.8 Z" fill="#c00000"/><path d="M184.8 452 H203 V463 H200 V454 H187.8 V463 H184.8 Z" fill="#12692f"/><path d="M200.1 608 H232 V619 H229 V610 H203.1 V619 H200.1 Z" fill="#12692f"/><path d="M151.9 93 C154.3 93 155.7 94.2 155.7 97.2 V110" fill="none" stroke="#17599a" stroke-width="1.15"/><path d="M151.1 109.2 H160.3 L155.7 113.7 Z" fill="#17599a"/><rect x="149.2" y="88.2" width="2.7" height="10.5" fill="#2b7ab8"/><path d="M155.7 119 C158.1 119 159.5 120.2 159.5 123.2 V136" fill="none" stroke="#17599a" stroke-width="1.15"/><path d="M154.9 135.2 H164.1 L159.5 139.7 Z" fill="#17599a"/><rect x="152.1" y="114.2" width="3.6" height="10.5" fill="#2b7ab8"/><path d="M157 145 C159.4 145 160.4 146.2 160.4 149.2 V162" fill="none" stroke="#17599a" stroke-width="1.15"/><path d="M155.8 161.2 H165 L160.4 165.7 Z" fill="#17599a"/><rect x="156" y="140.2" width="1" height="10.5" fill="#2b7ab8"/><path d="M164.9 171 C167.3 171 168.4 172.2 168.4 175.2 V188" fill="none" stroke="#17599a" stroke-width="1.15"/><path d="M163.8 187.2 H173 L168.4 191.7 Z" fill="#17599a"/><rect x="157.1" y="166.2" width="7.8" height="10.5" fill="#2b7ab8"/><path d="M165.8 197 C168.2 197 169.2 198.2 169.2 201.2 V214" fill="none" stroke="#17599a" stroke-width="1.15"/><path d="M164.6 213.2 H173.8 L169.2 217.7 Z" fill="#17599a"/><rect x="164.8" y="192.2" width="1" height="10.5" fill="#2b7ab8"/><path d="M167.9 223 C170.3 223 171.4 224.2 171.4 227.2 V240" fill="none" stroke="#17599a" stroke-width="1.15"/><path d="M166.8 239.2 H176 L171.4 243.7 Z" fill="#17599a"/><rect x="166.2" y="218.2" width="1.7" height="10.5" fill="#2b7ab8"/><path d="M169.8 249 C172.2 249 173.6 250.2 173.6 253.2 V266" fill="none" stroke="#17599a" stroke-width="1.15"/><path d="M169 265.2 H178.2 L173.6 269.7 Z" fill="#17599a"/><rect x="167.9" y="244.2" width="1.9" height="10.5" fill="#2b7ab8"/><path d="M170.9 275 C173.3 275 174.4 276.2 174.4 279.2 V318" fill="none" stroke="#17599a" stroke-width="1.15"/><path d="M169.8 317.2 H179 L174.4 321.7 Z" fill="#17599a"/><rect x="169.7" y="270.2" width="1.2" height="10.5" fill="#2b7ab8"/><path d="M179 327 C181.4 327 182.8 328.2 182.8 331.2 V344" fill="none" stroke="#17599a" stroke-width="1.15"/><path d="M178.2 343.2 H187.4 L182.8 347.7 Z" fill="#17599a"/><rect x="171.1" y="322.2" width="7.9" height="10.5" fill="#2b7ab8"/><path d="M181.7 353 C184.1 353 185.5 354.2 185.5 357.2 V370" fill="none" stroke="#17599a" stroke-width="1.15"/><path d="M180.9 369.2 H190.1 L185.5 373.7 Z" fill="#17599a"/><rect x="179" y="348.2" width="2.7" height="10.5" fill="#2b7ab8"/><path d="M184.8 379 C187.2 379 188.4 380.2 188.4 383.2 V396" fill="none" stroke="#17599a" stroke-width="1.15"/><path d="M183.8 395.2 H193 L188.4 399.7 Z" fill="#17599a"/><rect x="182.1" y="374.2" width="2.7" height="10.5" fill="#2b7ab8"/><path d="M186.8 405 C189.2 405 190.6 406.2 190.6 409.2 V474" fill="none" stroke="#17599a" stroke-width="1.15"/><path d="M186 473.2 H195.2 L190.6 477.7 Z" fill="#17599a"/><rect x="185.1" y="400.2" width="1.7" height="10.5" fill="#2b7ab8"/><path d="M193.8 483 C196.2 483 197.6 484.2 197.6 487.2 V500" fill="none" stroke="#17599a" stroke-width="1.15"/><path d="M193 499.2 H202.2 L197.6 503.7 Z" fill="#17599a"/><rect x="187.1" y="478.2" width="6.7" height="10.5" fill="#2b7ab8"/><path d="M196.3 509 C198.7 509 199.7 510.2 199.7 513.2 V526" fill="none" stroke="#17599a" stroke-width="1.15"/><path d="M195.1 525.2 H204.3 L199.7 529.7 Z" fill="#17599a"/><rect x="193.8" y="504.2" width="2.5" height="10.5" fill="#2b7ab8"/><path d="M198.3 535 C200.7 535 201.3 536.2 201.3 539.2 V552" fill="none" stroke="#17599a" stroke-width="1.15"/><path d="M196.7 551.2 H205.9 L201.3 555.7 Z" fill="#17599a"/><rect x="196" y="530.2" width="2.3" height="10.5" fill="#2b7ab8"/><path d="M200.4 561 C202.8 561 203.3 562.2 203.3 565.2 V578" fill="none" stroke="#17599a" stroke-width="1.15"/><path d="M198.7 577.2 H207.9 L203.3 581.7 Z" fill="#17599a"/><rect x="198.1" y="556.2" width="2.3" height="10.5" fill="#2b7ab8"/><path d="M202.5 587 C204.9 587 205.4 588.2 205.4 591.2 V630" fill="none" stroke="#17599a" stroke-width="1.15"/><path d="M200.8 629.2 H210 L205.4 633.7 Z" fill="#17599a"/><rect x="200.1" y="582.2" width="2.4" height="10.5" fill="#2b7ab8"/><path d="M211.7 639 C214.1 639 215.5 640.2 215.5 643.2 V656" fill="none" stroke="#17599a" stroke-width="1.15"/><path d="M210.9 655.2 H220.1 L215.5 659.7 Z" fill="#17599a"/><rect x="202.2" y="634.2" width="9.5" height="10.5" fill="#2b7ab8"/><path d="M216.6 665 C219 665 220.7 666.2 220.7 669.2 V682" fill="none" stroke="#17599a" stroke-width="1.15"/><path d="M216.1 681.2 H225.3 L220.7 685.7 Z" fill="#17599a"/><rect x="211.9" y="660.2" width="4.7" height="10.5" fill="#2b7ab8"/><path d="M227.6 691 C230 691 231.7 692.2 231.7 695.2 V708" fill="none" stroke="#17599a" stroke-width="1.15"/><path d="M227.1 707.2 H236.3 L231.7 711.7 Z" fill="#17599a"/><rect x="217.1" y="686.2" width="10.5" height="10.5" fill="#2b7ab8"/><path d="M148.5 0 V698" stroke="#555" stroke-width="1" stroke-dasharray="1 2.5"/><path d="M425.5 0 V698" stroke="#555" stroke-width="1" stroke-dasharray="1 2.5"/><path d="M148.5 8 V17" stroke="#fff" stroke-width="1" stroke-dasharray="1 1"/><path d="M425.5 8 V17" stroke="#fff" stroke-width="1" stroke-dasharray="1 1"/><path d="M148.5 37 V47" stroke="#fff" stroke-width="1" stroke-dasharray="1 1"/><path d="M148.5 63 V73" stroke="#fff" stroke-width="1" stroke-dasharray="1 1"/></svg>
<span style="left:1304.50px;top:302.43px;font:700 17.8px/17.8px 'Liberation Sans',sans-serif;color:#000;transform:scaleX(0.9720);transform-origin:0 0;">0%</span>
<span style="left:1307.50px;top:328.43px;font:700 17.8px/17.8px 'Liberation Sans',sans-serif;color:#000;transform:scaleX(0.9720);transform-origin:0 0;">0%</span>
<span style="left:1311.50px;top:354.43px;font:700 17.8px/17.8px 'Liberation Sans',sans-serif;color:#000;transform:scaleX(0.9720);transform-origin:0 0;">0%</span>
<span style="left:1312.40px;top:380.43px;font:700 17.8px/17.8px 'Liberation Sans',sans-serif;color:#000;transform:scaleX(0.9720);transform-origin:0 0;">0%</span>
<span style="left:1321.00px;top:406.43px;font:700 17.8px/17.8px 'Liberation Sans',sans-serif;color:#000;transform:scaleX(0.9720);transform-origin:0 0;">0%</span>
<span style="left:1321.80px;top:432.43px;font:700 17.8px/17.8px 'Liberation Sans',sans-serif;color:#000;transform:scaleX(0.9720);transform-origin:0 0;">0%</span>
<span style="left:1324.00px;top:458.43px;font:700 17.8px/17.8px 'Liberation Sans',sans-serif;color:#000;transform:scaleX(0.9720);transform-origin:0 0;">0%</span>
<span style="left:1325.60px;top:484.43px;font:700 17.8px/17.8px 'Liberation Sans',sans-serif;color:#000;transform:scaleX(0.9720);transform-origin:0 0;">0%</span>
<span style="left:1326.80px;top:536.43px;font:700 17.8px/17.8px 'Liberation Sans',sans-serif;color:#000;transform:scaleX(0.9720);transform-origin:0 0;">0%</span>
<span style="left:1334.50px;top:562.43px;font:700 17.8px/17.8px 'Liberation Sans',sans-serif;color:#000;transform:scaleX(0.9720);transform-origin:0 0;">0%</span>
<span style="left:1337.90px;top:588.43px;font:700 17.8px/17.8px 'Liberation Sans',sans-serif;color:#000;transform:scaleX(0.9720);transform-origin:0 0;">0%</span>
<span style="left:1340.90px;top:614.43px;font:700 17.8px/17.8px 'Liberation Sans',sans-serif;color:#000;transform:scaleX(0.9720);transform-origin:0 0;">0%</span>
<span style="left:1342.60px;top:692.43px;font:700 17.8px/17.8px 'Liberation Sans',sans-serif;color:#000;transform:scaleX(0.9720);transform-origin:0 0;">0%</span>
<span style="left:1349.80px;top:718.43px;font:700 17.8px/17.8px 'Liberation Sans',sans-serif;color:#000;transform:scaleX(0.9720);transform-origin:0 0;">0%</span>
<span style="left:1351.50px;top:744.43px;font:700 17.8px/17.8px 'Liberation Sans',sans-serif;color:#000;transform:scaleX(0.9720);transform-origin:0 0;">0%</span>
<span style="left:1353.40px;top:770.43px;font:700 17.8px/17.8px 'Liberation Sans',sans-serif;color:#000;transform:scaleX(0.9720);transform-origin:0 0;">0%</span>
<span style="left:1355.30px;top:796.43px;font:700 17.8px/17.8px 'Liberation Sans',sans-serif;color:#000;transform:scaleX(0.9720);transform-origin:0 0;">0%</span>
<span style="left:1357.80px;top:848.43px;font:700 17.8px/17.8px 'Liberation Sans',sans-serif;color:#000;transform:scaleX(0.9720);transform-origin:0 0;">0%</span>
<span style="left:1367.50px;top:874.43px;font:700 17.8px/17.8px 'Liberation Sans',sans-serif;color:#000;transform:scaleX(0.9720);transform-origin:0 0;">0%</span>
<span style="left:1372.70px;top:900.43px;font:700 17.8px/17.8px 'Liberation Sans',sans-serif;color:#000;transform:scaleX(0.9720);transform-origin:0 0;">0%</span>
<div style="left:926px;top:297px;width:132px;height:28px;box-sizing:border-box;border:2px solid #1e6b23;background:#fff"></div>
<div style="left:1054px;top:322px;width:4.5px;height:3.2px;background:#1e6b23;border-left:1px solid #fff;border-top:1px solid #fff;"></div>
<div style="left:1036.5px;top:300.3px;width:18px;height:22px;box-sizing:border-box;border:1px solid #d6d6d6;border-radius:2px;background:#fff"></div>
<svg style="left:1040px;top:308.4px;" width="11" height="7" viewBox="0 0 11 7"><path d="M1 .9 L5.6 5.5 L10.2 .9" fill="none" stroke="#666" stroke-width="1.1"/></svg>
<div style="left:928px;top:324.5px;width:173.5px;height:94.5px;box-sizing:border-box;border:1px solid #7a7a7a;background:#fff"></div>
<svg style="left:941px;top:336.4px;" width="10" height="68" viewBox="0 0 10 68"><path d="M.5 0 V67" stroke="#8a8a8a" stroke-width="1" stroke-dasharray="1 1"/><path d="M0 0.5 H9.5" stroke="#8a8a8a" stroke-width="1" stroke-dasharray="1 1"/><path d="M0 22.7 H9.5" stroke="#8a8a8a" stroke-width="1" stroke-dasharray="1 1"/><path d="M0 44.9 H9.5" stroke="#8a8a8a" stroke-width="1" stroke-dasharray="1 1"/><path d="M0 67.1 H9.5" stroke="#8a8a8a" stroke-width="1" stroke-dasharray="1 1"/></svg>
<div style="left:951px;top:328.1px;width:16px;height:16px;box-sizing:border-box;border:1.2px solid #7c7c7c;border-radius:3.5px;background:#f1f1f1"></div>
<span style="left:969.50px;top:329.00px;font:400 15px/15px 'Liberation Sans',sans-serif;color:#1a1a1a;transform:scaleX(0.9634);transform-origin:0 0;">Finance Manager</span>
<div style="left:951px;top:350.1px;width:16px;height:16px;box-sizing:border-box;border:1.2px solid #7c7c7c;border-radius:3.5px;background:#f1f1f1"></div>
<span style="left:969.50px;top:351.00px;font:400 15px/15px 'Liberation Sans',sans-serif;color:#1a1a1a;letter-spacing:-0.102px;">Project Manager</span>
<div style="left:951px;top:372.1px;width:16px;height:16px;box-sizing:border-box;border:1.2px solid #7c7c7c;border-radius:3.5px;background:#f1f1f1"></div>
<span style="left:969.50px;top:373.00px;font:400 15px/15px 'Liberation Sans',sans-serif;color:#1a1a1a;transform:scaleX(0.9207);transform-origin:0 0;">SAM</span>
<div style="left:951px;top:394.1px;width:16px;height:16px;box-sizing:border-box;border:1.2px solid #7c7c7c;border-radius:3.5px;background:#f1f1f1"></div>
<span style="left:969.50px;top:395.00px;font:400 15px/15px 'Liberation Sans',sans-serif;color:#1a1a1a;transform:scaleX(0.9252);transform-origin:0 0;">TOM</span>
<div style="left:0px;top:916px;width:16px;height:22px;background:#e6e6e6;"></div>
<div style="left:1860px;top:916px;width:43px;height:22px;background:#fff;"></div>
<div style="left:1884px;top:895px;width:19px;height:22px;background:#fff;"></div>
<div style="left:61px;top:916px;width:1124px;height:1px;background:#fff;"></div>
<div style="left:1190px;top:916px;width:694px;height:1px;background:#fff;"></div>
<div style="left:16px;top:916.5px;width:1169px;height:21.5px;background:#f5f5f5;border-radius:10px 0 0 10px;"></div>
<div style="left:1190px;top:916.5px;width:694.5px;height:21.5px;background:#f5f5f5;border-radius:10px;"></div>
<div style="left:1884px;top:168px;width:19px;height:742.3px;background:#f6f6f6;border-radius:9px;"></div>
<svg style="left:1888.7px;top:172.2px;" width="12" height="8.4" viewBox="0 0 12 8.4"><path d="M6 .8 L11.2 7.6 H.8 Z" fill="#707070" stroke="#707070" stroke-width="1.4" stroke-linejoin="round"/></svg>
<div style="left:1889.3px;top:187px;width:10.9px;height:188px;background:#707070;border-radius:5.5px;"></div>
<svg style="left:1888.7px;top:896.4px;" width="12" height="8.4" viewBox="0 0 12 8.4"><path d="M.8 .8 H11.2 L6 7.6 Z" fill="#707070" stroke="#707070" stroke-width="1.4" stroke-linejoin="round"/></svg>
<div style="left:1884.5px;top:911.5px;width:19px;height:4px;background:#ececec;border:1px solid #fdfdfd;border-radius:2px 0 0 2px;box-sizing:border-box;"></div>
<div style="left:1884px;top:915.6px;width:19px;height:1.2px;background:#7a7a7a;"></div>
<svg style="left:22.2px;top:922.2px;" width="9" height="11.4" viewBox="0 0 9 11.4"><path d="M8 .8 V10.4 L.8 5.6 Z" fill="#707070" stroke="#707070" stroke-width="1.4" stroke-linejoin="round"/></svg>
<svg style="left:1170.3px;top:922.2px;" width="9" height="11.4" viewBox="0 0 9 11.4"><path d="M.8 .8 V10.4 L8 5.6 Z" fill="#707070" stroke="#707070" stroke-width="1.4" stroke-linejoin="round"/></svg>
<svg style="left:1196px;top:922.2px;" width="9" height="11.4" viewBox="0 0 9 11.4"><path d="M8 .8 V10.4 L.8 5.6 Z" fill="#707070" stroke="#707070" stroke-width="1.4" stroke-linejoin="round"/></svg>
<svg style="left:1870.4px;top:922.2px;" width="9" height="11.4" viewBox="0 0 9 11.4"><path d="M.8 .8 V10.4 L8 5.6 Z" fill="#707070" stroke="#707070" stroke-width="1.4" stroke-linejoin="round"/></svg>
<div style="left:37.2px;top:922.2px;width:966px;height:10.9px;background:#707070;border-radius:5.5px;"></div>
<div style="left:1239.8px;top:922.2px;width:327.4px;height:10.9px;background:#707070;border-radius:5.5px;"></div>
<div style="left:0px;top:938px;width:1903px;height:23px;background:#f3f3f3;"></div>
<div style="left:0px;top:938px;width:1903px;height:1px;background:#d4d4d4;"></div>
<span style="left:0.30px;top:946.30px;font:400 13px/13px 'Liberation Sans',sans-serif;color:#333;transform:scaleX(0.9543);transform-origin:0 0;">Edit</span>
<span style="left:99.20px;top:946.30px;font:400 13px/13px 'Liberation Sans',sans-serif;color:#333;letter-spacing:-0.111px;">New Tasks : Manually Scheduled</span>
<svg style="left:77px;top:942px;" width="20" height="20" viewBox="0 0 20 20"><path d="M12.4 1 L18.6 7.2 L15.8 7.8 L12.2 11.4 L12 15.6 L10.2 17 L2.8 9.6 L4.6 7.8 L8.6 7.6 L12.2 4 Z" fill="none" stroke="#333" stroke-width="1.2" stroke-linejoin="round"/><path d="M6.4 13.4 L.6 19.4" stroke="#333" stroke-width="1.2"/></svg>
<div style="left:1485px;top:939px;width:50px;height:22px;background:#dddddd;"></div>
<svg style="left:1500px;top:943px;" width="20" height="18" viewBox="0 0 20 18"><rect x="0" y="0" width="20" height="2.8" fill="#3c3c3c"/><path d="M.75 2 V18 M5.3 2.8 V18 M19.25 2 V18 M.75 7.4 H5.3 M.75 12.2 H5.3" stroke="#3c3c3c" stroke-width="1.5" fill="none"/><path d="M8.2 8.4 V5.8 H17 V8.6" stroke="#3c3c3c" stroke-width="1.2" fill="none"/><rect x="8.6" y="7.6" width="4" height="3" stroke="#3c3c3c" stroke-width="1.2" fill="none"/><rect x="12.8" y="12.6" width="4" height="2.6" stroke="#3c3c3c" stroke-width="1.2" fill="none"/></svg>
<svg style="left:1550px;top:943px;" width="20" height="18" viewBox="0 0 20 18"><rect x="0" y="0" width="20" height="2.8" fill="#3c3c3c"/><path d="M.75 2 V18 M5.3 2.8 V18 M19.25 2 V18 M.75 7.4 H5.3 M.75 12.2 H5.3" stroke="#3c3c3c" stroke-width="1.5" fill="none"/><path d="M8.6 18 V12.4 H19.25" stroke="#3c3c3c" stroke-width="1.5" fill="none"/></svg>
<svg style="left:1600px;top:943px;" width="21" height="18" viewBox="0 0 21 18"><rect x="0" y="0" width="20" height="2.8" fill="#3c3c3c"/><path d="M.75 2 V18 M5.3 2.8 V11 M19.25 2 V5.6 M.75 7.4 H5.3 M.75 12.2 H4.2" stroke="#3c3c3c" stroke-width="1.5" fill="none"/><path d="M7.6 6.2 H12.4" stroke="#3c3c3c" stroke-width="1.6"/><circle cx="16" cy="9.6" r="2.7" stroke="#3c3c3c" stroke-width="1.5" fill="none"/><path d="M18 11.8 L20.4 14.8" stroke="#3c3c3c" stroke-width="1.5" fill="none"/><circle cx="9.2" cy="13.8" r="2.7" stroke="#3c3c3c" stroke-width="1.5" fill="none"/><path d="M4.8 19 A4.4 4.4 0 0 1 13.6 19" stroke="#3c3c3c" stroke-width="1.5" fill="none"/></svg>
<svg style="left:1650px;top:943px;" width="21" height="18" viewBox="0 0 21 18"><path d="M0 .9 H20 M.75 .2 V18 M5.3 .9 V11 M12 .9 V8 M19.25 .2 V5.6 M.75 5.4 H13 M.75 10.2 H5 M.75 14.6 H3.6" stroke="#3c3c3c" stroke-width="1.5" fill="none"/><circle cx="16" cy="9.6" r="2.7" stroke="#3c3c3c" stroke-width="1.5" fill="none"/><path d="M18 11.8 L20.4 14.8" stroke="#3c3c3c" stroke-width="1.5" fill="none"/><circle cx="9.2" cy="13.8" r="2.7" stroke="#3c3c3c" stroke-width="1.5" fill="none"/><path d="M4.8 19 A4.4 4.4 0 0 1 13.6 19" stroke="#3c3c3c" stroke-width="1.5" fill="none"/></svg>
<svg style="left:1699px;top:942px;" width="21" height="19" viewBox="0 0 21 19"><path d="M2.6 .75 H19 V19 M2.6 .75 V19" stroke="#3c3c3c" stroke-width="1.5" fill="none"/><path d="M.4 5.6 H4.8 M.4 14 H4.8" stroke="#3c3c3c" stroke-width="1.5" fill="none"/></svg>
<div style="left:1742px;top:951.2px;width:9.8px;height:1.2px;background:#444;"></div>
<div style="left:1757.8px;top:951.8px;width:125.2px;height:1.2px;background:#6a6a6a;"></div>
<div style="left:1810.2px;top:944.6px;width:5.6px;height:14.1px;background:#6a6a6a;"></div>
<div style="left:1820px;top:948.7px;width:1px;height:7.3px;background:#6a6a6a;"></div>
<div style="left:1888.7px;top:951px;width:9.6px;height:1.2px;background:#444;"></div>
<div style="left:1892.9px;top:946.8px;width:1.2px;height:9.6px;background:#444;"></div>
<div style="left:0;top:168px;width:16px;height:748px;overflow:hidden"><span style="position:absolute;left:-7.1px;top:440.6px;width:110px;transform-origin:0 0;transform:rotate(-90deg);font:400 15px/15px 'Liberation Sans',sans-serif;color:#257a2c;letter-spacing:.68px;-webkit-text-stroke:.25px #257a2c;white-space:pre">GANTT CHART</span></div>
<div style="left:0px;top:0px;width:1903px;height:43px;background:#e6e6e6;"></div>
<div style="left:0px;top:0px;width:1903px;height:5px;background:#107c41;"></div>
<span style="left:12.30px;top:16.61px;font:400 17px/17px 'Liberation Sans',sans-serif;color:#303030;transform:scaleX(0.8878);transform-origin:0 0;">File</span>
<span style="left:69.40px;top:16.61px;font:400 17px/17px 'Liberation Sans',sans-serif;color:#1a1a1a;transform:scaleX(0.8938);transform-origin:0 0;-webkit-text-stroke:.45px #1a1a1a;">Task</span>
<div style="left:69px;top:37.3px;width:33px;height:2.8px;background:#107c41;border-radius:1.5px;"></div>
<span style="left:124.30px;top:16.61px;font:400 17px/17px 'Liberation Sans',sans-serif;color:#303030;transform:scaleX(0.9373);transform-origin:0 0;">Resource</span>
<span style="left:217.60px;top:16.61px;font:400 17px/17px 'Liberation Sans',sans-serif;color:#303030;transform:scaleX(0.9706);transform-origin:0 0;">Report</span>
<span style="left:292.20px;top:16.61px;font:400 17px/17px 'Liberation Sans',sans-serif;color:#303030;letter-spacing:-0.162px;">Project</span>
<span style="left:368.20px;top:16.61px;font:400 17px/17px 'Liberation Sans',sans-serif;color:#303030;transform:scaleX(0.9740);transform-origin:0 0;">View</span>
<span style="left:428.40px;top:16.61px;font:400 17px/17px 'Liberation Sans',sans-serif;color:#303030;letter-spacing:-0.245px;">Help</span>
<span style="left:487.40px;top:16.61px;font:400 17px/17px 'Liberation Sans',sans-serif;color:#107c41;letter-spacing:0.079px;">Gantt Chart Format</span>
<span style="left:714.30px;top:15.61px;font:400 17px/17px 'Liberation Sans',sans-serif;color:#444;letter-spacing:0.278px;">Tell me what you want to do</span>
<svg style="left:680px;top:16px;" width="19" height="18" viewBox="0 0 19 18"><circle cx="11.6" cy="6.6" r="5.4" fill="none" stroke="#333" stroke-width="1.3"/><path d="M7.7 10.6 L1 17.2" stroke="#333" stroke-width="1.4" fill="none"/></svg>
<svg style="left:1812px;top:17px;" width="14" height="14" viewBox="0 0 14 14"><rect x="1" y="3.4" width="8.8" height="8.8" rx="1.8" fill="none" stroke="#222" stroke-width="1.3"/><path d="M4 1 H9.6 A3 3 0 0 1 12.6 4 V9.6" fill="none" stroke="#222" stroke-width="1.3"/></svg>
<svg style="left:1869px;top:17px;" width="14" height="14" viewBox="0 0 14 14"><path d="M1 1 L13 13 M13 1 L1 13" stroke="#222" stroke-width="1.3" fill="none"/></svg>
<div style="left:-5px;top:43px;width:1900px;height:123.8px;background:#fff;border-radius:8px;box-shadow:0 1px 3px rgba(0,0,0,.30),0 2px 6px rgba(0,0,0,.10),0 -1px 0 rgba(0,0,0,.05);"></div>
<div style="left:73px;top:50px;width:1px;height:110px;background:#d4d4d4;"></div>
<div style="left:284px;top:50px;width:1px;height:110px;background:#d4d4d4;"></div>
<div style="left:503px;top:50px;width:1px;height:110px;background:#d4d4d4;"></div>
<div style="left:840px;top:50px;width:1px;height:110px;background:#d4d4d4;"></div>
<div style="left:1167px;top:50px;width:1px;height:110px;background:#d4d4d4;"></div>
<div style="left:1372px;top:50px;width:1px;height:110px;background:#d4d4d4;"></div>
<div style="left:1625px;top:50px;width:1px;height:110px;background:#d4d4d4;"></div>
<div style="left:1788px;top:50px;width:1px;height:110px;background:#d4d4d4;"></div>
<div style="left:391px;top:97.5px;width:1px;height:28.9px;background:#d4d4d4;"></div>
<div style="left:578px;top:97.5px;width:1px;height:28.9px;background:#d4d4d4;"></div>
<div style="left:613px;top:97.5px;width:1px;height:28.9px;background:#d4d4d4;"></div>
<div style="left:990px;top:56px;width:1px;height:79px;background:#d4d4d4;"></div>
<span style="left:23.30px;top:149.86px;font:400 12.8px/12.8px 'Liberation Sans',sans-serif;color:#262626;transform:scaleX(0.9738);transform-origin:0 0;">View</span>
<span style="left:150.60px;top:149.86px;font:400 12.8px/12.8px 'Liberation Sans',sans-serif;color:#262626;letter-spacing:0.302px;">Clipboard</span>
<span style="left:371.40px;top:148.86px;font:400 12.8px/12.8px 'Liberation Sans',sans-serif;color:#262626;transform:scaleX(0.9570);transform-origin:0 0;">Font</span>
<span style="left:646.20px;top:149.86px;font:400 12.8px/12.8px 'Liberation Sans',sans-serif;color:#262626;transform:scaleX(0.9649);transform-origin:0 0;">Schedule</span>
<span style="left:988.50px;top:149.86px;font:400 12.8px/12.8px 'Liberation Sans',sans-serif;color:#262626;transform:scaleX(0.9173);transform-origin:0 0;">Tasks</span>
<span style="left:1254.30px;top:149.86px;font:400 12.8px/12.8px 'Liberation Sans',sans-serif;color:#262626;letter-spacing:-0.060px;">Insert</span>
<span style="left:1469.20px;top:149.86px;font:400 12.8px/12.8px 'Liberation Sans',sans-serif;color:#262626;letter-spacing:0.092px;">Properties</span>
<span style="left:1687.50px;top:149.86px;font:400 12.8px/12.8px 'Liberation Sans',sans-serif;color:#262626;letter-spacing:0.005px;">Editing</span>
<span style="left:19.20px;top:96.64px;font:400 14.6px/14.6px 'Liberation Sans',sans-serif;color:#b1b1b1;letter-spacing:-0.049px;">Gantt</span>
<span style="left:12.30px;top:116.64px;font:400 14.6px/14.6px 'Liberation Sans',sans-serif;color:#b1b1b1;transform:scaleX(0.9721);transform-origin:0 0;">Chart</span>
<svg style="left:51.2px;top:118.7px;" width="8.6" height="5.6" viewBox="0 0 8.6 5.6"><path d="M1 1 L4.3 4.6 L7.6 1" fill="none" stroke="#b1b1b1" stroke-width="1.2"/></svg>
<svg style="left:19px;top:57px;" width="36" height="28" viewBox="0 0 36 28"><rect x="0.8" y="0.8" width="34.4" height="26.4" fill="#f3f3f3" stroke="#ababab" stroke-width="1.5"/><path d="M1 7 H35 M1 14 H8 M1 20.5 H8 M8 7 V27" stroke="#ababab" stroke-width="1.5" fill="none"/><path d="M9.6 12.4 V9.8 H32.6 V12.4" stroke="#ababab" stroke-width="1" fill="none"/><rect x="9.6" y="14.3" width="7.3" height="3" fill="#d9d9d9" stroke="#ababab" stroke-width=".8"/><rect x="18.3" y="18.4" width="6.8" height="2.8" fill="#d9d9d9" stroke="#ababab" stroke-width=".8"/><rect x="27" y="21.9" width="5.6" height="2.8" fill="#d9d9d9" stroke="#ababab" stroke-width=".8"/></svg>
<span style="left:93.30px;top:98.64px;font:400 14.6px/14.6px 'Liberation Sans',sans-serif;color:#262626;transform:scaleX(0.8927);transform-origin:0 0;">Paste</span>
<svg style="left:104.7px;top:121.6px;" width="9" height="5.6" viewBox="0 0 9 5.6"><path d="M1 1 L4.5 4.6 L8 1" fill="none" stroke="#333" stroke-width="1.4"/></svg>
<svg style="left:96px;top:53px;" width="35" height="39" viewBox="0 0 35 39"><rect x="1.2" y="6.6" width="24.6" height="28.6" fill="#fbe3b6" stroke="#e8821e" stroke-width="2"/><rect x="4.4" y="9.6" width="18.4" height="22.6" fill="#fafafa"/><path d="M5.6 10.6 V5.4 H10 V4 A3.5 3.5 0 0 1 17 4 V5.4 H21.4 V10.6 Z" fill="#f6f6f6" stroke="#9a9a9a" stroke-width="1.2"/><rect x="17.4" y="16" width="16.4" height="21.4" fill="#fafafa" stroke="#5f5f5f" stroke-width="1.5"/></svg>
<svg style="left:146px;top:52px;" width="14" height="20" viewBox="0 0 14 20"><path d="M3.6 1 L9.3 14.8 M10.4 1 L4.7 14.8" stroke="#444" stroke-width="1.2" fill="none"/><circle cx="3.2" cy="17.2" r="2.1" fill="none" stroke="#2f8fd6" stroke-width="1.3"/><circle cx="10.8" cy="17.2" r="2.1" fill="none" stroke="#2f8fd6" stroke-width="1.3"/></svg>
<span style="left:168.40px;top:55.64px;font:400 14.6px/14.6px 'Liberation Sans',sans-serif;color:#262626;transform:scaleX(0.9382);transform-origin:0 0;">Cut</span>
<svg style="left:142px;top:83.5px;" width="22" height="21" viewBox="0 0 22 21"><path d="M9 15.8 H1.2 V1 H8.2 L10.5 3" fill="none" stroke="#444" stroke-width="1.3"/><path d="M9.2 5.8 H16.5 L20.3 9.6 V19.8 H9.2 Z" fill="#fafafa" stroke="#444" stroke-width="1.3"/><path d="M16.3 5.8 V9.8 H20.3" fill="none" stroke="#444" stroke-width="1.1"/><path d="M12 13 H17.5 M12 16 H17.5" stroke="#777" stroke-width="1.1"/></svg>
<span style="left:168.40px;top:87.84px;font:400 14.6px/14.6px 'Liberation Sans',sans-serif;color:#262626;letter-spacing:-0.230px;">Copy</span>
<svg style="left:217px;top:92px;" width="9" height="5.6" viewBox="0 0 9 5.6"><path d="M1 1 L4.5 4.6 L8 1" fill="none" stroke="#333" stroke-width="1.4"/></svg>
<svg style="left:143px;top:116px;" width="21" height="19" viewBox="0 0 21 19"><path d="M13.6 6.2 L18 1.6 L19.6 3.2 L15.6 8.2" fill="#d9d9d9" stroke="#ababab" stroke-width="1.2"/><path d="M6.2 5.2 L16.6 10.4 L14.6 12.6 L4.2 7.4 Z" fill="#eee" stroke="#ababab" stroke-width="1.2"/><path d="M3.6 8 L1 11.4 L9.2 18 L14 12.6 Z" fill="#d9d9d9" stroke="#ababab" stroke-width="1.1"/></svg>
<span style="left:168.40px;top:119.74px;font:400 14.6px/14.6px 'Liberation Sans',sans-serif;color:#b1b1b1;letter-spacing:-0.068px;">Format Painter</span>
<div style="left:295px;top:57px;width:116.5px;height:28.7px;background:#f0f0f0;border:1px solid #e2e2e2;border-radius:5px;box-sizing:border-box"></div>
<div style="left:415px;top:57px;width:78.6px;height:28.7px;background:#f0f0f0;border:1px solid #e2e2e2;border-radius:5px;box-sizing:border-box"></div>
<span style="left:298.40px;top:65.10px;font:400 15px/15px 'Liberation Sans',sans-serif;color:#bdbdbd;letter-spacing:-0.087px;">Calibri</span>
<svg style="left:401.1px;top:69.4px;" width="8.8" height="5.8" viewBox="0 0 8.8 5.8"><path d="M1 1 L4.4 4.8 L7.8 1" fill="none" stroke="#b0b0b0" stroke-width="1.2"/></svg>
<span style="left:419.30px;top:65.95px;font:400 14px/14px 'Liberation Sans',sans-serif;color:#bdbdbd;">11</span>
<svg style="left:482px;top:69.4px;" width="8.8" height="5.8" viewBox="0 0 8.8 5.8"><path d="M1 1 L4.4 4.8 L7.8 1" fill="none" stroke="#b0b0b0" stroke-width="1.2"/></svg>
<span style="left:305.70px;top:102.41px;font:700 17px/17px 'Liberation Sans',sans-serif;color:#a3a3a3;transform:scaleX(0.7516);transform-origin:0 0;">B</span>
<span style="left:339.28px;top:102.56px;font:italic 400 17px/17px 'Liberation Serif',serif;color:#a3a3a3;">I</span>
<span style="left:367.70px;top:103.28px;font:400 15.5px/15.5px 'Liberation Sans',sans-serif;color:#a3a3a3;">U</span>
<div style="left:367.5px;top:118.4px;width:11.5px;height:1.3px;background:#a3a3a3;"></div>
<svg style="left:399px;top:101px;" width="20" height="21" viewBox="0 0 20 21"><path d="M8.2 3.4 L14.4 9.6 L8.4 14.2 L3 8.6 Z" fill="none" stroke="#ababab" stroke-width="1.2"/><path d="M8.6 6.5 V2.6 A1.6 1.6 0 0 1 11.8 2.6 V7" fill="none" stroke="#ababab" stroke-width="1.1"/><path d="M13 8.4 C15.2 7.2 16 9 15.2 12.2" fill="none" stroke="#ababab" stroke-width="1.3"/><rect x="0" y="16.3" width="19.7" height="4.4" fill="#b9b9b9"/></svg>
<svg style="left:428.1px;top:109.6px;" width="8.8" height="5.8" viewBox="0 0 8.8 5.8"><path d="M1 1 L4.4 4.8 L7.8 1" fill="none" stroke="#b0b0b0" stroke-width="1.2"/></svg>
<span style="left:454.20px;top:99.66px;font:400 18.6px/18.6px 'Liberation Sans',sans-serif;color:#a8a8a8;">A</span>
<div style="left:450.3px;top:117.3px;width:19.7px;height:4.4px;background:#b9b9b9;"></div>
<svg style="left:479px;top:109.6px;" width="8.8" height="5.8" viewBox="0 0 8.8 5.8"><path d="M1 1 L4.4 4.8 L7.8 1" fill="none" stroke="#b0b0b0" stroke-width="1.2"/></svg>
<svg style="left:489px;top:150px;" width="11" height="10" viewBox="0 0 11 10"><path d="M0.6 9.4 V0.6 H9.4" fill="none" stroke="#b5b5b5" stroke-width="1.1"/><path d="M3.4 3.4 L9.6 9.6 M9.6 5 V9.6 H5" fill="none" stroke="#b5b5b5" stroke-width="1.1"/></svg>
<svg style="left:519px;top:62.2px;" width="20" height="10" viewBox="0 0 20 10"><rect x=".75" y=".75" width="18.3" height="8.3" fill="#f0f0f0" stroke="#ababab" stroke-width="1.5"/></svg>
<span style="left:522.65px;top:73.34px;font:400 9.4px/9.4px 'Liberation Sans',sans-serif;color:#b8b8b8;transform:scaleX(0.9203);transform-origin:0 0;">0%</span>
<svg style="left:551.05px;top:62.2px;" width="20" height="10" viewBox="0 0 20 10"><rect x=".75" y=".75" width="18.3" height="8.3" fill="#f0f0f0" stroke="#ababab" stroke-width="1.5"/><rect x="1.6" y="3.4" width="5" height="3" fill="#b4b4b4"/></svg>
<span style="left:552.15px;top:73.34px;font:400 9.4px/9.4px 'Liberation Sans',sans-serif;color:#b8b8b8;transform:scaleX(0.9362);transform-origin:0 0;">25%</span>
<svg style="left:583.1px;top:62.2px;" width="20" height="10" viewBox="0 0 20 10"><rect x=".75" y=".75" width="18.3" height="8.3" fill="#f0f0f0" stroke="#ababab" stroke-width="1.5"/><rect x="1.6" y="3.4" width="9" height="3" fill="#b4b4b4"/></svg>
<span style="left:584.20px;top:73.34px;font:400 9.4px/9.4px 'Liberation Sans',sans-serif;color:#b8b8b8;transform:scaleX(0.9362);transform-origin:0 0;">50%</span>
<svg style="left:615.15px;top:62.2px;" width="20" height="10" viewBox="0 0 20 10"><rect x=".75" y=".75" width="18.3" height="8.3" fill="#f0f0f0" stroke="#ababab" stroke-width="1.5"/><rect x="1.6" y="3.4" width="13.6" height="3" fill="#b4b4b4"/></svg>
<span style="left:616.25px;top:73.34px;font:400 9.4px/9.4px 'Liberation Sans',sans-serif;color:#b8b8b8;transform:scaleX(0.9362);transform-origin:0 0;">75%</span>
<svg style="left:647.2px;top:62.2px;" width="20" height="10" viewBox="0 0 20 10"><rect x=".75" y=".75" width="18.3" height="8.3" fill="#f0f0f0" stroke="#ababab" stroke-width="1.5"/><rect x="1.2" y="3.4" width="17.4" height="3" fill="#b4b4b4"/></svg>
<span style="left:647.30px;top:73.34px;font:400 9.4px/9.4px 'Liberation Sans',sans-serif;color:#b8b8b8;transform:scaleX(0.8145);transform-origin:0 0;">100%</span>
<svg style="left:520px;top:102.7px;" width="19" height="19" viewBox="0 0 19 19"><path d="M0 1.4 H18 M0 6.2 H18 M0 11.6 H7.4 M0 16.4 H7.4" stroke="#ababab" stroke-width="1.5" fill="none"/><path d="M18 14 H10.8 M13.8 11 L10.6 14 L13.8 17" stroke="#ababab" stroke-width="1.5" fill="none"/></svg>
<svg style="left:552px;top:102.7px;" width="19" height="19" viewBox="0 0 19 19"><path d="M0 1.4 H18 M0 6.2 H18 M10.6 11.6 H18 M10.6 16.4 H18" stroke="#ababab" stroke-width="1.5" fill="none"/><path d="M0 14 H7.2 M4.2 11 L7.4 14 L4.2 17" stroke="#ababab" stroke-width="1.5" fill="none"/></svg>
<svg style="left:586.5px;top:102px;" width="19" height="19" viewBox="0 0 19 19"><rect x=".8" y="5.6" width="6.4" height="7.8" fill="#d9d9d9" stroke="#ababab" stroke-width="1.3"/><rect x="10.8" y="5.6" width="7.2" height="7.8" fill="#d9d9d9" stroke="#ababab" stroke-width="1.3"/><path d="M8.8 .3 V4.5 M8.8 14.5 V18.7 M2.8 .6 L4.9 4.2 M14.9 .6 L12.8 4.2 M2.8 18.4 L4.9 14.8 M14.9 18.4 L12.8 14.8" stroke="#ababab" stroke-width="1.3" fill="none"/></svg>
<svg style="left:620.5px;top:105px;" width="21" height="14" viewBox="0 0 21 14"><rect x=".8" y=".8" width="13.8" height="9.2" rx="4.6" stroke="#ababab" stroke-width="1.5" fill="none"/><rect x="7" y="4.2" width="13.2" height="8.8" rx="4.4" stroke="#fff" stroke-width="3.4" fill="none"/><rect x="7" y="4.2" width="13.2" height="8.8" rx="4.4" stroke="#ababab" stroke-width="1.5" fill="none"/><path d="M9.8 9.9 A4.6 4.6 0 0 0 14.6 5.4" stroke="#fff" stroke-width="3.2" fill="none"/><path d="M9.2 10 H10 A4.6 4.6 0 0 0 14.6 5.4" stroke="#ababab" stroke-width="1.5" fill="none"/></svg>
<svg style="left:653px;top:102px;" width="21" height="20" viewBox="0 0 21 20"><path d="M9.6 4.6 H5.2 A4.5 4.5 0 0 0 3.4 13 M7 13.2 A4.5 4.5 0 0 0 9.6 10" stroke="#ababab" stroke-width="1.5" fill="none"/><path d="M8.4 11.4 A4.2 4.2 0 0 0 12 16.2 H15.6 A4.4 4.4 0 0 0 17.4 8" stroke="#ababab" stroke-width="1.5" fill="none"/><path d="M14.4 .4 L14 4.6 M18.6 1.2 L16.6 5 M11 1.6 L11.8 4.6 M2.4 18.8 L4.2 15 M6 19.6 L6.2 15.6" stroke="#ababab" stroke-width="1.2" fill="none"/></svg>
<svg style="left:684px;top:52.5px;" width="19" height="19" viewBox="0 0 19 19"><path d="M0 1.6 H17.6 V7.6 H0 Z" fill="#d9d9d9" stroke="#ababab" stroke-width="1.3"/><path d="M0 4.6 H17.6" stroke="#ababab" stroke-width="1.1"/><path d="M13.4 0 V18.4" stroke="#ababab" stroke-width="1.4"/><path d="M4 14 H12 M9 11 L12.2 14 L9 17" stroke="#ababab" stroke-width="1.5" fill="none"/></svg>
<span style="left:708.40px;top:55.64px;font:400 14.6px/14.6px 'Liberation Sans',sans-serif;color:#b1b1b1;letter-spacing:-0.055px;">Mark on Track</span>
<svg style="left:815px;top:59.6px;" width="8.6" height="5.6" viewBox="0 0 8.6 5.6"><path d="M1 1 L4.3 4.6 L7.6 1" fill="none" stroke="#b1b1b1" stroke-width="1.2"/></svg>
<svg style="left:683px;top:87.5px;" width="21" height="17" viewBox="0 0 21 17"><path d="M10.6 5.4 A3.4 3.4 0 0 1 7.2 7.8 H4.2 A3.4 3.4 0 0 1 4.2 1 H7.6 A3.4 3.4 0 0 1 10.8 3.2" stroke="#ababab" stroke-width="1.5" fill="none"/><path d="M9 5.6 A3.4 3.4 0 0 1 12.2 3.2 H15.6 A3.4 3.4 0 0 1 17 9.6" stroke="#ababab" stroke-width="1.5" fill="none"/><path d="M6.2 10.4 L10.8 15 L19.4 6.2" stroke="#ababab" stroke-width="1.5" fill="none"/></svg>
<span style="left:708.40px;top:88.14px;font:400 14.6px/14.6px 'Liberation Sans',sans-serif;color:#b1b1b1;transform:scaleX(0.9565);transform-origin:0 0;">Respect Links</span>
<svg style="left:683.4px;top:120.8px;" width="20" height="10" viewBox="0 0 20 10"><rect x="1.4" y=".8" width="16.6" height="8.4" rx="1" fill="#eee" stroke="#ababab" stroke-width="1.4"/><path d="M0 5 H19.4" stroke="#fff" stroke-width="3.6"/><path d="M0 3.4 H19.4 M0 6.6 H19.4" stroke="#ababab" stroke-width="1.3"/></svg>
<span style="left:708.40px;top:119.74px;font:400 14.6px/14.6px 'Liberation Sans',sans-serif;color:#b1b1b1;letter-spacing:0.090px;">Inactivate</span>
<svg style="left:865px;top:54px;" width="36" height="35" viewBox="0 0 36 35"><path d="M23.5 1 L34.6 12 L29.6 13.4 L22.6 20.4 L22 28.6 L18 31.8 L3.6 17.4 L7.4 13.4 L15.2 13 L22.2 6 Z" fill="#d9d9d9" stroke="#ababab" stroke-width="1.3" stroke-linejoin="round"/><path d="M10.8 24.6 L1 34.4" stroke="#ababab" stroke-width="1.5"/></svg>
<span style="left:853.50px;top:96.94px;font:400 14.6px/14.6px 'Liberation Sans',sans-serif;color:#b1b1b1;letter-spacing:0.129px;">Manually</span>
<span style="left:853.50px;top:116.84px;font:400 14.6px/14.6px 'Liberation Sans',sans-serif;color:#b1b1b1;transform:scaleX(0.9740);transform-origin:0 0;">Schedule</span>
<svg style="left:932px;top:61px;" width="39" height="30" viewBox="0 0 39 30"><path d="M17 18.2 H1 V.8 H35 V13" fill="#d9d9d9" stroke="#ababab" stroke-width="1.5"/><path d="M1 .8 H35 V18.2 H1 Z" fill="#d9d9d9" stroke="none"/><path d="M17 18.2 H1 V.8 H35 V13" fill="none" stroke="#ababab" stroke-width="1.5"/><path d="M18 21.6 H36.6" stroke="#fff" stroke-width="4"/><path d="M29 13.6 L37 21.6 L29 29.6" stroke="#fff" stroke-width="4" fill="none"/><path d="M18 21.6 H36.6 M29 13.6 L37 21.6 L29 29.6" stroke="#ababab" stroke-width="1.5" fill="none"/></svg>
<span style="left:934.30px;top:96.94px;font:400 14.6px/14.6px 'Liberation Sans',sans-serif;color:#b1b1b1;letter-spacing:0.432px;">Auto</span>
<span style="left:920.50px;top:116.84px;font:400 14.6px/14.6px 'Liberation Sans',sans-serif;color:#b1b1b1;transform:scaleX(0.9691);transform-origin:0 0;">Schedule</span>
<svg style="left:1006px;top:61px;" width="39" height="30" viewBox="0 0 39 30"><rect x=".8" y=".8" width="34" height="17.4" fill="#d9d9d9" stroke="#ababab" stroke-width="1.5"/><path d="M27 8 L37.4 18.6 L27 29.2 L16.6 18.6 Z" fill="#f6f6f6" stroke="#fff" stroke-width="4"/><path d="M27 8 L37.4 18.6 L27 29.2 L16.6 18.6 Z" fill="#f6f6f6" stroke="#ababab" stroke-width="1.4"/></svg>
<span style="left:1029.50px;top:74.34px;font:700 12px/12px 'Liberation Sans',sans-serif;color:#ababab;">?</span>
<span style="left:1000.50px;top:99.74px;font:400 14.6px/14.6px 'Liberation Sans',sans-serif;color:#b1b1b1;letter-spacing:-0.098px;">Inspect</span>
<svg style="left:1019px;top:123px;" width="8.6" height="5.6" viewBox="0 0 8.6 5.6"><path d="M1 1 L4.3 4.6 L7.6 1" fill="none" stroke="#b1b1b1" stroke-width="1.2"/></svg>
<svg style="left:1060px;top:53px;" width="39" height="38" viewBox="0 0 39 38"><rect x=".8" y="4.4" width="34.4" height="32" fill="#f3f3f3" stroke="#ababab" stroke-width="1.5"/><path d="M.8 4.4 H35.2 M7.6 0 V8 M28.4 0 V8" stroke="#ababab" stroke-width="1.5" fill="none"/><rect x="11.4" y="19" width="2.6" height="2.6" fill="#ababab"/><path d="M18 29.6 H37 M29.4 22 L37.2 29.6 L29.4 37.4" stroke="#fff" stroke-width="4" fill="none"/><path d="M18 29.6 H37 M29.4 22 L37.2 29.6 L29.4 37.4" stroke="#ababab" stroke-width="1.5" fill="none"/></svg>
<span style="left:1059.50px;top:96.94px;font:400 14.6px/14.6px 'Liberation Sans',sans-serif;color:#b1b1b1;letter-spacing:0.201px;">Move</span>
<svg style="left:1073px;top:119.8px;" width="8.6" height="5.6" viewBox="0 0 8.6 5.6"><path d="M1 1 L4.3 4.6 L7.6 1" fill="none" stroke="#b1b1b1" stroke-width="1.2"/></svg>
<svg style="left:1114px;top:53px;" width="39" height="38" viewBox="0 0 39 38"><rect x=".8" y=".8" width="34.4" height="35" fill="#f3f3f3" stroke="#ababab" stroke-width="1.5"/><rect x=".8" y=".8" width="34.4" height="5.4" fill="#d9d9d9" stroke="#ababab" stroke-width="1.5"/><path d="M.8 14 H35 M.8 25 H35 M12.4 6 V36 M24 6 V36" stroke="#ababab" stroke-width="1.4" fill="none"/><rect x="25" y="14" width="14" height="24" fill="#fff"/></svg>
<span style="left:1138.20px;top:65.61px;font:400 30px/30px 'Liberation Sans',sans-serif;color:#ababab;">?</span>
<span style="left:1112.30px;top:96.94px;font:400 14.6px/14.6px 'Liberation Sans',sans-serif;color:#b1b1b1;letter-spacing:0.733px;">Mode</span>
<svg style="left:1127.1px;top:119.8px;" width="8.6" height="5.6" viewBox="0 0 8.6 5.6"><path d="M1 1 L4.3 4.6 L7.6 1" fill="none" stroke="#b1b1b1" stroke-width="1.2"/></svg>
<svg style="left:1183px;top:51px;" width="40" height="29" viewBox="0 0 40 29"><rect x="4.2" y="10.6" width="34" height="17.4" fill="#d9d9d9" stroke="#ababab" stroke-width="1.5"/><path d="M1 9 H19.6 M10.2 0 V18.6" stroke="#fff" stroke-width="4.4"/><path d="M1 9 H19.6 M10.2 0 V18.6" stroke="#ababab" stroke-width="1.5"/></svg>
<span style="left:1190.30px;top:99.34px;font:400 14.6px/14.6px 'Liberation Sans',sans-serif;color:#b1b1b1;transform:scaleX(0.9011);transform-origin:0 0;">Task</span>
<svg style="left:1199.1px;top:123px;" width="8.6" height="5.6" viewBox="0 0 8.6 5.6"><path d="M1 1 L4.3 4.6 L7.6 1" fill="none" stroke="#b1b1b1" stroke-width="1.2"/></svg>
<svg style="left:1236.5px;top:51.5px;" width="20" height="14" viewBox="0 0 20 14"><path d="M.5 4 H9.5 M5 .4 V9" stroke="#ababab" stroke-width="1.5" fill="none"/><path d="M2.5 6.8 V13 M10.6 6 H18.6 V13" stroke="#ababab" stroke-width="1.5" fill="none"/></svg>
<span style="left:1262.40px;top:55.64px;font:400 14.6px/14.6px 'Liberation Sans',sans-serif;color:#b1b1b1;letter-spacing:-0.198px;">Summary</span>
<svg style="left:1236.5px;top:84px;" width="21" height="20" viewBox="0 0 21 20"><path d="M10.5 1 L19.5 9.8 L10.3 18.8 L1.3 9.8 Z" fill="#f1f1f1" stroke="#ababab" stroke-width="1.5" stroke-linejoin="round"/><path d="M-.5 4.5 H10.4 M5 -.5 V9.4" stroke="#fff" stroke-width="3.6"/><path d="M.5 4.5 H9.5 M5 .5 V8.6" stroke="#ababab" stroke-width="1.5" fill="none"/></svg>
<span style="left:1262.40px;top:88.14px;font:400 14.6px/14.6px 'Liberation Sans',sans-serif;color:#b1b1b1;letter-spacing:0.189px;">Milestone</span>
<svg style="left:1236.5px;top:116px;" width="20" height="20" viewBox="0 0 20 20"><path d="M10 .6 L18 5 V14.5 L10 19 L2 14.5 V5 Z" fill="#f1f1f1" stroke="#ababab" stroke-width="1.5" stroke-linejoin="round"/><path d="M10 19 V9.4 L18 5 M10 9.4 L2 5" fill="none" stroke="#ababab" stroke-width="1.4"/><path d="M-.5 4.2 H10.2 M5 -.5 V9.2" stroke="#fff" stroke-width="3.6"/><path d="M.5 4.2 H9.5 M5 .2 V8.4" stroke="#ababab" stroke-width="1.5" fill="none"/></svg>
<span style="left:1262.40px;top:119.74px;font:400 14.6px/14.6px 'Liberation Sans',sans-serif;color:#b1b1b1;letter-spacing:0.203px;">Deliverable</span>
<svg style="left:1342.4px;top:122.2px;" width="8.6" height="5.6" viewBox="0 0 8.6 5.6"><path d="M1 1 L4.3 4.6 L7.6 1" fill="none" stroke="#b1b1b1" stroke-width="1.2"/></svg>
<svg style="left:1406px;top:61px;" width="39" height="30" viewBox="0 0 39 30"><rect x=".8" y=".8" width="34" height="17.4" fill="#d9d9d9" stroke="#ababab" stroke-width="1.5"/><circle cx="28.4" cy="20.6" r="8.6" fill="#f6f6f6" stroke="#fff" stroke-width="3.6"/><circle cx="28.4" cy="20.6" r="8.6" fill="#f6f6f6" stroke="#ababab" stroke-width="1.4"/><path d="M28.4 18.6 V25.6" stroke="#ababab" stroke-width="1.5"/><circle cx="28.4" cy="15.8" r="1" fill="#ababab"/></svg>
<span style="left:1385.30px;top:96.64px;font:400 14.6px/14.6px 'Liberation Sans',sans-serif;color:#b1b1b1;letter-spacing:0.413px;">Information</span>
<svg style="left:1474.4px;top:53px;" width="18" height="18" viewBox="0 0 18 18"><path d="M.9 .9 H16.4 V11.4 L11.4 16.6 H.9 Z" fill="#f3f3f3" stroke="#ababab" stroke-width="1.8" stroke-linejoin="round"/><path d="M16.4 11.4 H11.4 V16.6" fill="#d9d9d9" stroke="#ababab" stroke-width="1.4"/></svg>
<span style="left:1498.60px;top:55.64px;font:400 14.6px/14.6px 'Liberation Sans',sans-serif;color:#b1b1b1;">Notes</span>
<svg style="left:1473.2px;top:85.4px;" width="20" height="18" viewBox="0 0 20 18"><rect x=".8" y=".8" width="18.2" height="15.8" fill="#f3f3f3" stroke="#ababab" stroke-width="1.6"/><rect x=".8" y=".8" width="18.2" height="2.6" fill="#ababab"/><path d="M2.6 7.4 H7 M2.6 12 H7" stroke="#ababab" stroke-width="1.3"/><rect x="9" y="5.9" width="7.6" height="2.8" fill="#d9d9d9" stroke="#ababab" stroke-width=".9"/><rect x="9" y="10.6" width="2.8" height="2.8" fill="#d9d9d9" stroke="#ababab" stroke-width=".9"/><rect x="13.8" y="10.6" width="2.8" height="2.8" fill="#d9d9d9" stroke="#ababab" stroke-width=".9"/></svg>
<span style="left:1498.60px;top:88.14px;font:400 14.6px/14.6px 'Liberation Sans',sans-serif;color:#b1b1b1;letter-spacing:0.083px;">Details</span>
<svg style="left:1473px;top:116px;" width="21" height="20" viewBox="0 0 21 20"><path d="M.4 .6 H16.6" stroke="#ababab" stroke-width="1.2" stroke-dasharray="3.2 1"/><path d="M2 1 V3.4 M14.2 1 V3.4" stroke="#ababab" stroke-width="1.3"/><rect x="2" y="3.8" width="12.2" height="4.4" fill="#f1f1f1" stroke="#ababab" stroke-width="1.4"/><path d="M.4 15.4 H8 M4.2 11.4 V19.6" stroke="#ababab" stroke-width="1.5" fill="none"/><rect x="9.4" y="13.2" width="10.2" height="4.8" fill="#d9d9d9" stroke="#ababab" stroke-width="1.3"/></svg>
<span style="left:1498.60px;top:119.74px;font:400 14.6px/14.6px 'Liberation Sans',sans-serif;color:#b1b1b1;letter-spacing:0.388px;">Add to Timeline</span>
<svg style="left:1644px;top:61px;" width="40" height="31" viewBox="0 0 40 31"><rect x=".8" y=".8" width="34.2" height="17.4" fill="#d9d9d9" stroke="#ababab" stroke-width="1.5"/><path d="M21.6 6.4 V27.4 L26.4 23 L29.6 30 L32.8 28.6 L29.6 21.8 H36.2 Z" fill="#d9d9d9" stroke="#fff" stroke-width="3.4" stroke-linejoin="round"/><path d="M21.6 6.4 V27.4 L26.4 23 L29.6 30 L32.8 28.6 L29.6 21.8 H36.2 Z" fill="#e4e4e4" stroke="#ababab" stroke-width="1.3" stroke-linejoin="round"/></svg>
<span style="left:1643.60px;top:96.94px;font:400 14.6px/14.6px 'Liberation Sans',sans-serif;color:#b1b1b1;letter-spacing:-0.180px;">Scroll</span>
<span style="left:1639.30px;top:116.84px;font:400 14.6px/14.6px 'Liberation Sans',sans-serif;color:#b1b1b1;letter-spacing:-0.160px;">to Task</span>
<svg style="left:1694.4px;top:51.5px;" width="21" height="21" viewBox="0 0 21 21"><circle cx="13.4" cy="6.6" r="5.6" fill="#f3f3f3" stroke="#ababab" stroke-width="1.4"/><path d="M9.4 10.8 L.8 19.6" stroke="#ababab" stroke-width="1.5"/></svg>
<span style="left:1720.60px;top:55.64px;font:400 14.6px/14.6px 'Liberation Sans',sans-serif;color:#b1b1b1;transform:scaleX(0.9262);transform-origin:0 0;">Find</span>
<svg style="left:1763px;top:59.6px;" width="8.6" height="5.6" viewBox="0 0 8.6 5.6"><path d="M1 1 L4.3 4.6 L7.6 1" fill="none" stroke="#b1b1b1" stroke-width="1.2"/></svg>
<svg style="left:1695px;top:84px;" width="21" height="20" viewBox="0 0 21 20"><path d="M12.4 .8 L19.6 8 L8.6 19 L1.4 11.8 Z" fill="#f1f1f1" stroke="#ababab" stroke-width="1.3" stroke-linejoin="round"/><path d="M5.6 7.6 L12.8 14.8 L8.6 19 L1.4 11.8 Z" fill="#cfcfcf" stroke="#ababab" stroke-width="1.2" stroke-linejoin="round"/></svg>
<span style="left:1720.60px;top:88.14px;font:400 14.6px/14.6px 'Liberation Sans',sans-serif;color:#b1b1b1;transform:scaleX(0.9486);transform-origin:0 0;">Clear</span>
<svg style="left:1758.2px;top:90.9px;" width="8.6" height="5.6" viewBox="0 0 8.6 5.6"><path d="M1 1 L4.3 4.6 L7.6 1" fill="none" stroke="#b1b1b1" stroke-width="1.2"/></svg>
<svg style="left:1695px;top:117px;" width="21" height="18" viewBox="0 0 21 18"><rect x=".8" y=".8" width="18.6" height="16.4" fill="#f3f3f3" stroke="#ababab" stroke-width="1.6"/><rect x=".8" y=".8" width="18.6" height="2.8" fill="#ababab"/><path d="M10 6.6 V14 M6.8 11 L10 14.2 L13.2 11" stroke="#ababab" stroke-width="1.5" fill="none"/></svg>
<span style="left:1720.60px;top:119.74px;font:400 14.6px/14.6px 'Liberation Sans',sans-serif;color:#b1b1b1;transform:scaleX(0.9186);transform-origin:0 0;">Fill</span>
<svg style="left:1743.2px;top:122.2px;" width="8.6" height="5.6" viewBox="0 0 8.6 5.6"><path d="M1 1 L4.3 4.6 L7.6 1" fill="none" stroke="#b1b1b1" stroke-width="1.2"/></svg>
<svg style="left:1869.7px;top:145.4px;" width="14" height="9" viewBox="0 0 14 9"><path d="M1 1.4 L7 7.4 L13 1.4" fill="none" stroke="#333" stroke-width="1.4"/></svg>
</body></html>
